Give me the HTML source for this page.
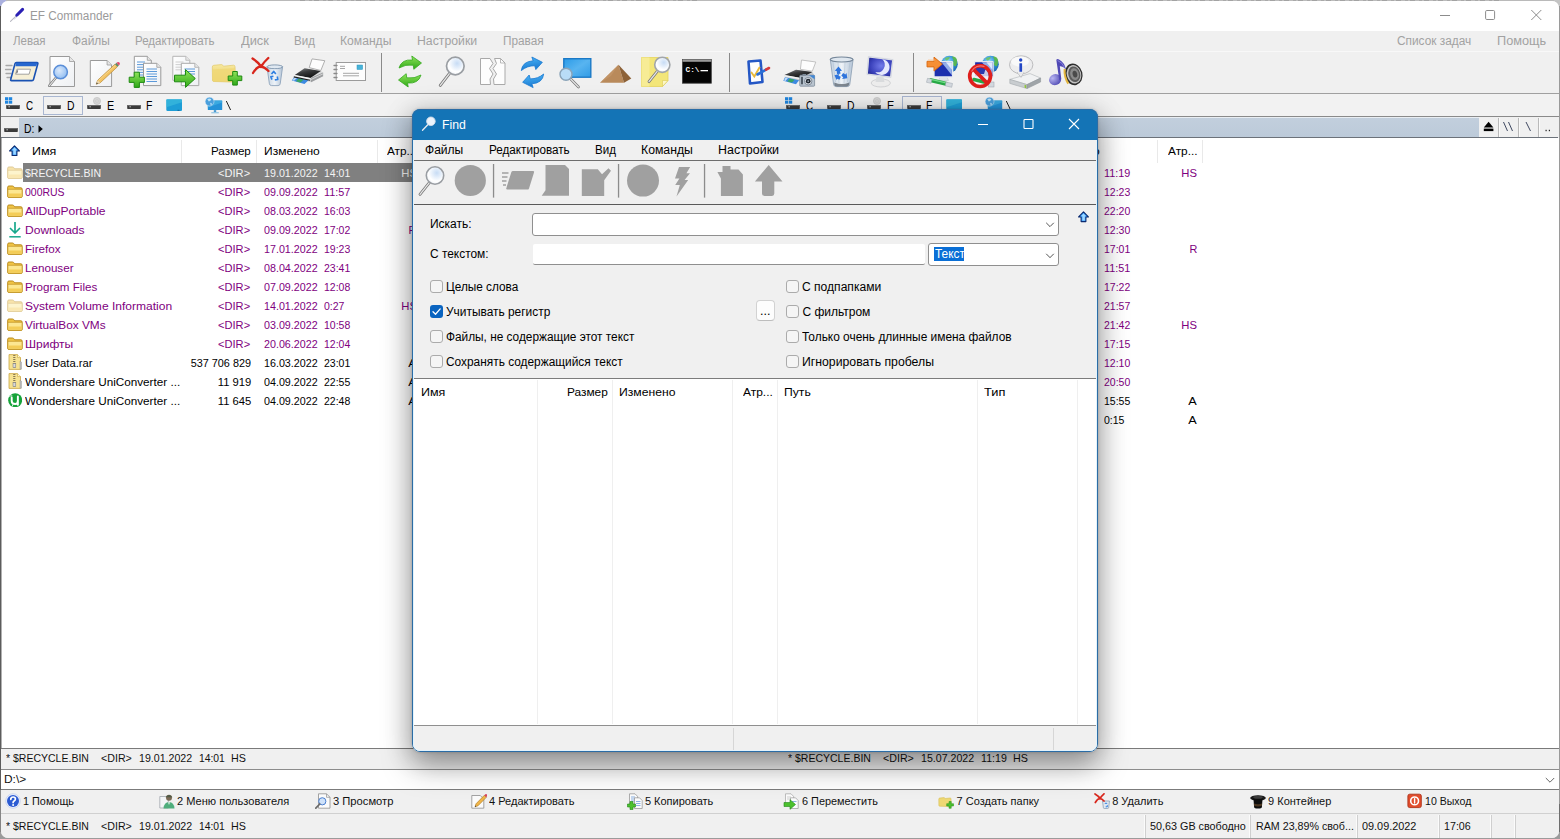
<!DOCTYPE html>
<html lang="ru"><head><meta charset="utf-8"><title>EF Commander</title><style>
html,body{margin:0;padding:0;}
body{width:1560px;height:839px;overflow:hidden;position:relative;background:#f0f0f0;font-family:"Liberation Sans",sans-serif;}
.b{position:absolute;display:block;}
.t{position:absolute;display:block;white-space:pre;line-height:16px;height:16px;font-family:"Liberation Sans",sans-serif;}
</style></head>
<body>
<div class="b" style="left:0px;top:0px;width:1560px;height:839px;background:#9b9b9b;"></div>
<div class="b" style="left:1500px;top:0px;width:60px;height:8px;background:#c4c4c4;"></div>
<div class="b" style="left:0px;top:0px;width:6px;height:6px;background:#aab0de;"></div>
<div class="b" style="left:1px;top:1px;width:1558px;height:837px;background:#f0f0f0;border-radius:7px;"></div>
<div class="b" style="left:6px;top:0px;width:1548px;height:1px;background:#bababa;"></div>
<div class="b" style="left:300px;top:0px;width:400px;height:1px;background:repeating-linear-gradient(90deg,#a3a3a3 0 5px,#bcbcbc 5px 9px,#a9a9a9 9px 12px,#bebebe 12px 14px);"></div>
<div class="b" style="left:920px;top:0px;width:580px;height:1px;background:repeating-linear-gradient(90deg,#a3a3a3 0 5px,#bcbcbc 5px 9px,#a9a9a9 9px 12px,#bebebe 12px 14px);"></div>
<div class="b" style="left:1px;top:1px;width:1558px;height:30px;background:#ffffff;border-radius:7px 7px 0 0;"></div>
<svg class="b" style="left:9px;top:7px" width="16" height="16" viewBox="0 0 16 16"><path d="M1.500 14.300 L7.800 8.300" stroke="#b9b9c2" stroke-width="1.100" stroke-linecap="round"/><path d="M7.800 8.300 L13.600 2.400" stroke="#2a1fb4" stroke-width="3" stroke-linecap="round"/><path d="M8.800 9.300 L5 12.300" stroke="#c9cbe8" stroke-width="0.800"/></svg>
<span class="t" id="t0" style="top:8px;font-size:12px;color:#9a9a9a;left:29.88px;transform:scaleX(0.979);transform-origin:left center;">EF Commander</span>
<svg class="b" style="left:1436px;top:8px" width="112" height="16" viewBox="0 0 112 16"><path d="M4 7.500 h10" stroke="#8c8c8c" stroke-width="1"/><rect x="49.600" y="2.500" width="9" height="9" rx="1.200" fill="none" stroke="#8c8c8c" stroke-width="1"/><path d="M95.300 2 l10 10 M105.300 2 l-10 10" stroke="#8c8c8c" stroke-width="1"/></svg>
<span class="t" id="t1" style="top:33px;font-size:12px;color:#a2a2a2;left:12.88px;transform:scaleX(0.960);transform-origin:left center;">Левая</span>
<span class="t" id="t2" style="top:33px;font-size:12px;color:#a2a2a2;left:71.58px;transform:scaleX(0.994);transform-origin:left center;">Файлы</span>
<span class="t" id="t3" style="top:33px;font-size:12px;color:#a2a2a2;left:135.18px;transform:scaleX(0.960);transform-origin:left center;">Редактировать</span>
<span class="t" id="t4" style="top:33px;font-size:12px;color:#a2a2a2;left:240.88px;transform:scaleX(1.069);transform-origin:left center;">Диск</span>
<span class="t" id="t5" style="top:33px;font-size:12px;color:#a2a2a2;left:293.88px;transform:scaleX(0.962);transform-origin:left center;">Вид</span>
<span class="t" id="t6" style="top:33px;font-size:12px;color:#a2a2a2;left:339.88px;transform:scaleX(1.011);transform-origin:left center;">Команды</span>
<span class="t" id="t7" style="top:33px;font-size:12px;color:#a2a2a2;left:416.88px;transform:scaleX(1.023);transform-origin:left center;">Настройки</span>
<span class="t" id="t8" style="top:33px;font-size:12px;color:#a2a2a2;left:502.88px;transform:scaleX(0.981);transform-origin:left center;">Правая</span>
<span class="t" id="t9" style="top:33px;font-size:12px;color:#a2a2a2;left:1396.58px;transform:scaleX(0.988);transform-origin:left center;">Список задач</span>
<span class="t" id="t10" style="top:33px;font-size:12px;color:#a2a2a2;left:1496.58px;transform:scaleX(1.061);transform-origin:left center;">Помощь</span>
<div class="b" style="left:1px;top:51px;width:1558px;height:1px;background:#f8f8f8;"></div>
<div class="b" style="left:1px;top:93px;width:1558px;height:1px;background:#a0a0a0;"></div>
<div class="b" style="left:381px;top:53px;width:1px;height:39px;background:#8a8a8a;"></div>
<div class="b" style="left:729px;top:53px;width:1px;height:39px;background:#8a8a8a;"></div>
<div class="b" style="left:913px;top:53px;width:1px;height:39px;background:#8a8a8a;"></div>
<svg class="b" style="left:0;top:52px" width="1560" height="42" viewBox="0 52 1560 42">
<defs>
<linearGradient id="gGreen" x1="0" y1="0" x2="0" y2="1"><stop offset="0" stop-color="#8fe45a"/><stop offset="1" stop-color="#2fa818"/></linearGradient>
<linearGradient id="gBlue" x1="0" y1="0" x2="0" y2="1"><stop offset="0" stop-color="#49b2f5"/><stop offset="1" stop-color="#1877cf"/></linearGradient>
<linearGradient id="gFold" x1="0" y1="0" x2="0" y2="1"><stop offset="0" stop-color="#f7e9a0"/><stop offset="1" stop-color="#e6c451"/></linearGradient>
<linearGradient id="gPage" x1="0" y1="0" x2="1" y2="1"><stop offset="0" stop-color="#ffffff"/><stop offset="1" stop-color="#eef0f3"/></linearGradient>
<radialGradient id="gLens" cx="0.6" cy="0.35" r="0.8"><stop offset="0" stop-color="#c7dcf5"/><stop offset="0.6" stop-color="#ffffff"/><stop offset="1" stop-color="#e9eef5"/></radialGradient>
<radialGradient id="gLensB" cx="0.4" cy="0.4" r="0.8"><stop offset="0" stop-color="#dbe9fb"/><stop offset="1" stop-color="#7eb2ef"/></radialGradient>
<linearGradient id="gBin" x1="0" y1="0" x2="1" y2="0"><stop offset="0" stop-color="#c5d3e2"/><stop offset="0.5" stop-color="#eef3f8"/><stop offset="1" stop-color="#b4c4d6"/></linearGradient>
<linearGradient id="gScreen" x1="0" y1="0" x2="1" y2="1"><stop offset="0" stop-color="#2b9be8"/><stop offset="0.5" stop-color="#58b4f0"/><stop offset="1" stop-color="#2f9be6"/></linearGradient>
<linearGradient id="gMoon" x1="0" y1="0" x2="1" y2="1"><stop offset="0" stop-color="#4b57c8"/><stop offset="1" stop-color="#1c2478"/></linearGradient>
<radialGradient id="gGlobe" cx="0.4" cy="0.35" r="0.75"><stop offset="0" stop-color="#9fe0ff"/><stop offset="0.55" stop-color="#2f8fd8"/><stop offset="1" stop-color="#1b5fa8"/></radialGradient>
<linearGradient id="gSilver" x1="0" y1="0" x2="0" y2="1"><stop offset="0" stop-color="#f4f4f4"/><stop offset="1" stop-color="#a9adb0"/></linearGradient>
<radialGradient id="gNote" cx="0.35" cy="0.3" r="0.8"><stop offset="0" stop-color="#b9b6f2"/><stop offset="1" stop-color="#4a45b0"/></radialGradient>
<radialGradient id="gSpk" cx="0.45" cy="0.5" r="0.6"><stop offset="0" stop-color="#5a5a5a"/><stop offset="0.45" stop-color="#a8a8a8"/><stop offset="0.75" stop-color="#6c6c6c"/><stop offset="1" stop-color="#2e2e2e"/></radialGradient>
<linearGradient id="gPrinter" x1="0" y1="0" x2="0" y2="1"><stop offset="0" stop-color="#4a4a4a"/><stop offset="1" stop-color="#1d1d1d"/></linearGradient>
<linearGradient id="gPrTop" x1="0" y1="0" x2="0.600" y2="1"><stop offset="0" stop-color="#8a8c8e"/><stop offset="0.450" stop-color="#3a3b3c"/><stop offset="1" stop-color="#0e0e0e"/></linearGradient>
<radialGradient id="gMoon2" cx="0.550" cy="0.450" r="0.700"><stop offset="0" stop-color="#737bea"/><stop offset="0.600" stop-color="#3a41bb"/><stop offset="1" stop-color="#1d2283"/></radialGradient>
</defs>
<g><path d="M6 65.5h6 M5.5 69.5h5.5 M6 73.5h5 M7 77.5h4" stroke="#a8a8a8" stroke-width="1.3" stroke-linecap="round"/><path d="M16.5 62.5 L37 62.5 Q38.2 62.5 37.8 63.8 L33.5 79.5 Q33.2 80.6 32 80.6 L11.5 80.6 Q10.3 80.6 10.7 79.4 L15 63.6 Q15.3 62.5 16.5 62.5z" fill="#f6efd6" stroke="#1a52b3" stroke-width="1.6"/><path d="M16.2 62.8 L37.3 62.8 L36.4 66.2 L15.3 66.2z" fill="#2767cf"/><path d="M17 69.2 h13.5 l-1.4 5 h-13.5z" fill="#fff" stroke="#8d8d8d" stroke-width="0.8"/><path d="M17.6 70.4 l-0.8 2.8" stroke="#333" stroke-width="0.8"/></g><path d="M50 56.5 h19.5 l5 5 v25 h-24.5 z" fill="url(#gPage)" stroke="#9a9a9a" stroke-width="1"/><path d="M69.5 56.5 v5 h5" fill="#e6e6e6" stroke="#9a9a9a" stroke-width="0.8"/><line x1="56.2692" y1="77.2425" x2="49.2" y2="85.8" stroke="#777777" stroke-width="2.4" stroke-linecap="round"/><line x1="56.2692" y1="77.2425" x2="49.2" y2="85.8" stroke="#e6e6e6" stroke-width="1.08" stroke-linecap="round"/><circle cx="60.6" cy="72" r="6.8" fill="url(#gLensB)" stroke="#5a8ed8" stroke-width="1.5"/><path d="M90.3 60.5 h16.8 l4.5 4.5 v21.5 h-21.3 z" fill="url(#gPage)" stroke="#9a9a9a" stroke-width="1"/><path d="M107.1 60.5 v4.5 h4.5" fill="#e6e6e6" stroke="#9a9a9a" stroke-width="0.8"/><path d="M96.200 84.200 L97.700 80.200 L115 64.200 L117.400 66.800 L100.200 82.800z" fill="#f3c363" stroke="#b8862f" stroke-width="0.700" stroke-linejoin="round"/><path d="M98.500 80.600 L115.800 64.900" stroke="#f9dc98" stroke-width="0.800"/><path d="M115 64.200 L116.500 62.800 L118.900 65.400 L117.400 66.800z" fill="#5f8a66"/><path d="M116.500 62.800 Q118.200 61.200 119.500 62.500 Q120.700 63.900 118.900 65.400z" fill="#e2466b"/><path d="M96.200 84.200 L97.700 80.200 L100.200 82.800z" fill="#ead7b3"/><path d="M96.200 84.200 l0.700 -1.800 l1.100 1.100z" fill="#2b2b2b"/><path d="M134.3 56.3 h13 l4 4 v20 h-17 z" fill="url(#gPage)" stroke="#9a9a9a" stroke-width="1"/><path d="M147.3 56.3 v4 h4" fill="#e6e6e6" stroke="#9a9a9a" stroke-width="0.8"/><line x1="137" y1="62" x2="145" y2="62" stroke="#4a8fd6" stroke-width="0.9"/><line x1="137" y1="64.6" x2="145" y2="64.6" stroke="#4a8fd6" stroke-width="0.9"/><line x1="137" y1="67.2" x2="145" y2="67.2" stroke="#4a8fd6" stroke-width="0.9"/><line x1="137" y1="69.8" x2="145" y2="69.8" stroke="#4a8fd6" stroke-width="0.9"/><line x1="137" y1="72.4" x2="145" y2="72.4" stroke="#4a8fd6" stroke-width="0.9"/><line x1="137" y1="75" x2="145" y2="75" stroke="#4a8fd6" stroke-width="0.9"/><path d="M143.5 63.3 h13.3 l4 4 v18.3 h-17.3 z" fill="url(#gPage)" stroke="#9a9a9a" stroke-width="1"/><path d="M156.8 63.3 v4 h4" fill="#e6e6e6" stroke="#9a9a9a" stroke-width="0.8"/><line x1="146.5" y1="69" x2="157" y2="69" stroke="#4a8fd6" stroke-width="0.9"/><line x1="146.5" y1="71.5" x2="157" y2="71.5" stroke="#4a8fd6" stroke-width="0.9"/><line x1="146.5" y1="74" x2="157" y2="74" stroke="#4a8fd6" stroke-width="0.9"/><line x1="146.5" y1="76.5" x2="157" y2="76.5" stroke="#4a8fd6" stroke-width="0.9"/><line x1="146.5" y1="79" x2="157" y2="79" stroke="#4a8fd6" stroke-width="0.9"/><line x1="146.5" y1="81.5" x2="157" y2="81.5" stroke="#4a8fd6" stroke-width="0.9"/><path d="M134.2 72.2 h5.2 v5 h5 v5.2 h-5 v5 h-5.2 v-5 h-5 v-5.2 h5 z" fill="url(#gGreen)" stroke="#1f8a12" stroke-width="1" stroke-linejoin="round"/><path d="M172.8 56.3 h13 l4 4 v20 h-17 z" fill="url(#gPage)" stroke="#b5b5b5" stroke-width="1"/><path d="M185.8 56.3 v4 h4" fill="#e6e6e6" stroke="#b5b5b5" stroke-width="0.8"/><line x1="175.5" y1="62" x2="183.5" y2="62" stroke="#c9c9c9" stroke-width="0.9"/><line x1="175.5" y1="64.6" x2="183.5" y2="64.6" stroke="#c9c9c9" stroke-width="0.9"/><line x1="175.5" y1="67.2" x2="183.5" y2="67.2" stroke="#c9c9c9" stroke-width="0.9"/><line x1="175.5" y1="69.8" x2="183.5" y2="69.8" stroke="#c9c9c9" stroke-width="0.9"/><path d="M181.3 63.3 h13.5 l4 4 v18.3 h-17.5 z" fill="url(#gPage)" stroke="#a9a9a9" stroke-width="1"/><path d="M194.8 63.3 v4 h4" fill="#e6e6e6" stroke="#a9a9a9" stroke-width="0.8"/><line x1="184.5" y1="69" x2="195" y2="69" stroke="#4a8fd6" stroke-width="0.9"/><line x1="184.5" y1="71.5" x2="195" y2="71.5" stroke="#4a8fd6" stroke-width="0.9"/><line x1="184.5" y1="74" x2="195" y2="74" stroke="#4a8fd6" stroke-width="0.9"/><path d="M174.5 75.2 h11 v-5.6 l9.8 8.9 l-9.8 8.9 v-5.6 h-11z" fill="url(#gGreen)" stroke="#1f8a12" stroke-width="1" stroke-linejoin="round"/><path d="M212.3 67 q0 -1.5 1.5 -1.7 l8 -0.7 l2 1.6 l9.6 -1 q1.6 0 1.6 1.5 l0.5 14 q0 1.4 -1.5 1.4 l-20 -0.6 q-1.5 0 -1.5 -1.5z" fill="url(#gFold)" stroke="#e3cd74" stroke-width="0.8"/><path d="M212.5 69.5 l22.5 -1.2 l0.4 12 q0 1.5 -1.5 1.5 l-20 -0.6 q-1.4 0 -1.4 -1.5z" fill="#efd878" opacity="0.9"/><path d="M232.7 71.5 h4.6 v4.5 h4.5 v4.6 h-4.5 v4.5 h-4.6 v-4.5 h-4.5 v-4.6 h4.5 z" fill="url(#gGreen)" stroke="#1f8a12" stroke-width="1" stroke-linejoin="round"/><path d="M267 66.8 l2.4 17 q0.3 1.8 2.2 1.8 h6.4 q1.9 0 2.2 -1.8 l2.4 -17z" fill="url(#gBin)" stroke="#8ea4bb" stroke-width="0.9"/><ellipse cx="274.8" cy="66.8" rx="7.8" ry="1.9" fill="#dfe8f1" stroke="#7c93ab" stroke-width="0.9"/><path d="M271.5 74 l2.3 -2.6 l2 2.6 M277.3 76.5 l0.5 3 l-3 0.4 M272 79.6 l-1.2 -2.8 l2.6 -0.6" fill="none" stroke="#2f7fe0" stroke-width="1.6" stroke-linejoin="round"/><path d="M252.5 58.5 Q258 62 261 66.5 Q264 62 268.3 58 M253 73 Q257 66.5 261 66.5 Q264.5 67 268.5 71" fill="none" stroke="#d8261c" stroke-width="2.3" stroke-linecap="round"/><path d="M309.200 67.600 L312.100 58.900 L324.800 60.700 L320.800 70.500z" fill="#fdfdfd" stroke="#9d9d9d" stroke-width="0.800" stroke-linejoin="round"/><path d="M294.800 75.100 L304.600 68.200 L320.800 71 L323.100 72.400 L323.100 76.300 L311 82.200 L293.500 78z" fill="#d9dadb"/><path d="M294.800 75.100 L304.600 68.200 L320.800 71 L310.400 78z" fill="url(#gPrTop)"/><path d="M310.400 78 L323.100 72.400 L323.100 76.300 L311 82.200z" fill="#9c9ea0"/><path d="M311 79.500 L323.100 73.800" stroke="#e8e8e8" stroke-width="0.700"/><path d="M294.800 75.100 L310.400 78 L310.700 79.600 L294 76.500z" fill="#f4f4f4"/><path d="M294 77.300 L308.500 80.300 L304.500 84 L291.800 80.600z" fill="#3d8ae0"/><path d="M298.500 78.600 L303.500 79.700 L300.500 82.500 L296 81.300z" fill="#3aa564"/><path d="M294.500 77.500 L297 78 L294 80.800 L292.300 80.300z" fill="#b9d6f5"/><path d="M293.800 76.900 L310 80.200" stroke="#1e1e1e" stroke-width="1.100"/><rect x="336.2" y="62.5" width="29.3" height="18" fill="#fdfdfd" stroke="#9b9b9b" stroke-width="1"/><path d="M334 65.5h3 M334 69.5h3 M334 73.500h3 M334 77.500h3" stroke="#8a8a8a" stroke-width="1.3" stroke-linecap="round"/><rect x="357" y="65" width="5.600" height="4.500" fill="#48b3d9" stroke="#2f97bf" stroke-width="0.5"/><path d="M340 66.300h5 M340 68.500h5 M343 73.300h16 M343 75.800h16" stroke="#9c9c9c" stroke-width="0.9"/><g transform="translate(410 71.5) rotate(0) scale(1)"><path d="M-11 -3.500 Q-8.500 -12.500 2.500 -11.500 L1.800 -15.500 L11.500 -8.500 L3.800 -2.200 L3.300 -6.300 Q-4.500 -7.500 -11 -3.500z" fill="url(#gGreen)" stroke="#35a81e" stroke-width="0.8" stroke-linejoin="round"/><path d="M11 3.500 Q8.500 12.500 -2.500 11.500 L-1.800 15.500 L-11.500 8.500 L-3.800 2.200 L-3.300 6.300 Q4.500 7.500 11 3.500z" fill="url(#gGreen)" stroke="#35a81e" stroke-width="0.8" stroke-linejoin="round"/></g><line x1="449.9" y1="72.9482" x2="440.3" y2="85.3" stroke="#777777" stroke-width="3" stroke-linecap="round"/><line x1="449.9" y1="72.9482" x2="440.3" y2="85.3" stroke="#e6e6e6" stroke-width="1.35" stroke-linecap="round"/><circle cx="455.3" cy="66" r="8.8" fill="url(#gLens)" stroke="#9a9ea3" stroke-width="1.7"/><path d="M480.500 58.500 h9.500 l3 5 l-3.500 5 l3.500 5.500 l-3 5 l0.500 5.500 h-10z" fill="#fdfdfd" stroke="#a9a9a9" stroke-width="1" stroke-linejoin="round"/><path d="M494.500 58.500 h6 l4.500 4.500 v21.500 h-11 l-0.500 -5.500 l3 -5 l-3.500 -5.500 l3.500 -5z" fill="#fdfdfd" stroke="#a9a9a9" stroke-width="1" stroke-linejoin="round"/><path d="M500.500 58.500 v4.500 h4.500" fill="none" stroke="#a9a9a9" stroke-width="0.8"/><g transform="translate(532.5 72.3) rotate(-9) scale(0.98)"><path d="M-11 -3.500 Q-8.500 -12.500 2.500 -11.500 L1.800 -15.500 L11.500 -8.500 L3.800 -2.200 L3.300 -6.300 Q-4.500 -7.500 -11 -3.500z" fill="url(#gBlue)" stroke="#1b7bd2" stroke-width="0.8" stroke-linejoin="round"/><path d="M11 3.500 Q8.500 12.500 -2.500 11.500 L-1.800 15.500 L-11.500 8.500 L-3.800 2.200 L-3.300 6.300 Q4.500 7.500 11 3.500z" fill="url(#gBlue)" stroke="#1b7bd2" stroke-width="0.8" stroke-linejoin="round"/></g><rect x="563.800" y="58.700" width="27" height="18.500" fill="url(#gScreen)" stroke="#1b79c6" stroke-width="1.400"/><line x1="570.192" y1="78.4926" x2="578.5" y2="87" stroke="#777777" stroke-width="2.6" stroke-linecap="round"/><line x1="570.192" y1="78.4926" x2="578.5" y2="87" stroke="#e6e6e6" stroke-width="1.17" stroke-linecap="round"/><circle cx="566" cy="74.2" r="6" fill="#b9dcf7" stroke="#8aa3b8" stroke-width="1.4"/><path d="M618.500 64.800 L600 82.700 L624 82.700z" fill="#b98a5b"/><path d="M618.500 64.800 L624 82.700 L631.300 78.500z" fill="#8d6238"/><path d="M618.500 64.800 L611 76 L600 82.700z" fill="#c69a6c" opacity="0.6"/><path d="M641.500 57.500 h20 l6.500 0 v23 l-5.500 6 h-21z" fill="#f3e679" stroke="#e5d45d" stroke-width="0.8"/><path d="M641.500 57.500 h8 v29 h-8z" fill="#f7ee9c" opacity="0.8"/><path d="M662.500 86.500 v-6 h5.500z" fill="#fbf6c8" stroke="#dccb55" stroke-width="0.600"/><line x1="657.6" y1="70.7723" x2="649" y2="81.7" stroke="#777777" stroke-width="2.8" stroke-linecap="round"/><line x1="657.6" y1="70.7723" x2="649" y2="81.7" stroke="#e6e6e6" stroke-width="1.26" stroke-linecap="round"/><circle cx="662.3" cy="64.8" r="7.6" fill="url(#gLens)" stroke="#a2a6aa" stroke-width="1.6"/><rect x="682.500" y="59.500" width="28.800" height="23.700" fill="#050505" stroke="#3c3c3c" stroke-width="0.800"/><rect x="682.500" y="59.500" width="28.800" height="2.300" fill="#9a9a9a"/><text x="685.500" y="71.500" font-family="Liberation Mono, monospace" font-size="7.500" font-weight="bold" fill="#fff" textLength="14" lengthAdjust="spacingAndGlyphs">C:\</text><rect x="700.500" y="70" width="7.500" height="1.300" fill="#fff"/><path d="M748.500 61.500 l12 -1 l2 21.500 l-12.500 1.500z" fill="#fdfdfd" stroke="#2457c5" stroke-width="2.600" stroke-linejoin="round"/><path d="M751.500 72.500 l2.800 4 l5.200 -9" fill="none" stroke="#e8b93a" stroke-width="1.900" stroke-linecap="round"/><path d="M757.500 74.500 l8.500 -4.800" stroke="#2b6fd6" stroke-width="2.600" stroke-linecap="round"/><path d="M766 69.700 l3 -1.700" stroke="#d83a3a" stroke-width="2.600" stroke-linecap="round"/><path d="M800.400 69.300 L801.500 60 L815.800 62 L812.300 71.200z" fill="#fdfdfd" stroke="#b5b5b5" stroke-width="0.800" stroke-linejoin="round"/><path d="M784.600 75 L796 69.700 L812.300 72 L814.500 75.500 L803 82 L785 79z" fill="#c9cbcd"/><path d="M784.600 75 L796 69.700 L812.300 72 L801 78z" fill="url(#gPrTop)"/><path d="M784.600 75 L801 78 L801 79.500 L784.300 76.500z" fill="#f1f1f1"/><path d="M785 77.300 L799 80.200 L796 84.200 L783.300 80.800z" fill="#3d8ae0"/><path d="M789.500 78.600 L794.500 79.700 L792 82.600 L787.500 81.500z" fill="#3aa564"/><path d="M785.500 77.600 L788 78.100 L785.500 80.900 L784 80.500z" fill="#c3dcf6"/><rect x="799.800" y="75.200" width="14.800" height="11" rx="0.800" fill="#b9c4cf" stroke="#7d8b99" stroke-width="0.800"/><path d="M809 75.200 h5.600 v4z" fill="#3f86d6"/><rect x="801.200" y="76.800" width="1.600" height="7.500" fill="#39424e"/><rect x="802.500" y="74" width="3.500" height="1.600" fill="#7d8b99"/><circle cx="808.200" cy="81.200" r="3.700" fill="#e9eef3" stroke="#596675" stroke-width="0.700"/><circle cx="808.200" cy="81.200" r="2.400" fill="#1f262f"/><circle cx="808.200" cy="81.200" r="0.900" fill="#8c97a3"/><path d="M830.300 59.500 l3.300 24.800 q0.300 2.300 2.600 2.300 h11 q2.300 0 2.600 -2.300 l3.300 -24.800z" fill="url(#gBin)" stroke="#93a5b8" stroke-width="0.900"/><path d="M834.300 82.500 q7.500 3 15 0 l-0.300 2.300 q-0.300 1.800 -2.600 1.800 h-9.500 q-2.300 0 -2.600 -1.800z" fill="#5b646e" opacity="0.750"/><path d="M833 62 l2.500 20 M838 62.500 l1 20.500 M845 62.500 l-1 20.500 M850 62 l-2.500 20" stroke="#a9bccf" stroke-width="0.700" opacity="0.700"/><ellipse cx="841.600" cy="59.500" rx="11.400" ry="2.500" fill="#dfe7ef" stroke="#76889b" stroke-width="1.100"/><path d="M834.800 70.800 l3.700 -4.200 l3.500 4.200 l-2 0.300 l0.500 2.700 l-3.500 0.200 l-0.300 -3z M846.500 73 l0.800 5.200 l-5.200 0.800 l1.200 -1.800 l-2 -1.500 l1.800 -2.800 l2.200 1.500z M836.500 80 l-2 -4.800 l4.800 -1.200 l-0.800 1.800 l2.300 1 l-1.300 3 l-2.300 -1z" fill="#2e74dc"/><ellipse cx="880.800" cy="83" rx="9.600" ry="4" fill="#ececec" stroke="#c4c6c8" stroke-width="0.700"/><path d="M876.500 76.500 h7 l1 5.500 h-9z" fill="#d9dbdd"/><path d="M868.500 56.600 L893 59.700 L890.800 77.400 L867 74.300z" fill="url(#gMoon2)" stroke="#e9ebef" stroke-width="1.700" stroke-linejoin="round"/><path d="M868.500 56.600 L893 59.700 L890.800 77.400 L867 74.300z" fill="none" stroke="#b4b8c4" stroke-width="0.400" stroke-linejoin="round" transform="translate(0 0)"/><path d="M882.300 59.300 a7.900 7.900 0 1 1 -7 12.600 a7.400 7.400 0 0 0 7 -12.600z" fill="#eef0ff" opacity="0.950"/><circle cx="949.4" cy="64.2" r="8.400" fill="url(#gGlobe)"/><path d="M951.9 56.7 q3.500 -1 5 2.500 q0.800 3.500 -1 7 q-2.500 0.500 -3 -2.500 q1.500 -3 -1 -7z" fill="#5dbb46" opacity="0.900"/><path d="M944.4 58.7 q2.500 -2 5.500 -1.500 q-0.500 2.500 -3 3.500z" fill="#6cc65a" opacity="0.850"/><path d="M940 77 h7 l1.500 3.500 h-10z" fill="#dfe3e8" stroke="#aab2bc" stroke-width="0.400"/><rect x="934" y="61.6" width="18.600" height="15.400" rx="0.800" fill="#1c2fae" stroke="#e6eaf0" stroke-width="1.300"/><path d="M941.4 62.3 h10.500 v13 z" fill="#a9c4f5" opacity="0.850"/><path d="M945.9 62.3 h6 v7.500z" fill="#e9f1ff" opacity="0.900"/><path d="M927 61.300 h7 v-4.200 l8.300 7 l-8.300 7 v-4.200 h-7z" fill="#f68f35" stroke="#d96a12" stroke-width="0.900" stroke-linejoin="round"/><path d="M928 60 h7" stroke="#fbc38f" stroke-width="0.800"/><path d="M931 80.200 L946 83.800" stroke="#27a845" stroke-width="4.200" stroke-linecap="round"/><path d="M932 79.600 L945 82.700" stroke="#6fdc86" stroke-width="1.200" stroke-linecap="round"/><path d="M927.500 78.300 l4.500 1 l-1 4 l-4.500 -1z" fill="#d3d8de" stroke="#98a1ab" stroke-width="0.500"/><path d="M946 82 l6.500 1.500 l-0.800 3.800 l-6.500 -1.500z" fill="#d3d8de" stroke="#98a1ab" stroke-width="0.500"/><circle cx="990.4" cy="64.2" r="8.400" fill="url(#gGlobe)"/><path d="M992.9 56.7 q3.500 -1 5 2.500 q0.800 3.500 -1 7 q-2.500 0.500 -3 -2.500 q1.500 -3 -1 -7z" fill="#5dbb46" opacity="0.900"/><path d="M985.4 58.7 q2.500 -2 5.500 -1.500 q-0.500 2.500 -3 3.500z" fill="#6cc65a" opacity="0.850"/><path d="M980.5 77 h7 l1.500 3.500 h-10z" fill="#dfe3e8" stroke="#aab2bc" stroke-width="0.400"/><rect x="974.5" y="61.6" width="18.600" height="15.400" rx="0.800" fill="#1a2aa8" stroke="#e6eaf0" stroke-width="1.300"/><path d="M981.9 62.3 h10.500 v13 z" fill="#a9c4f5" opacity="0.850"/><path d="M986.4 62.3 h6 v7.500z" fill="#e9f1ff" opacity="0.900"/><circle cx="980.100" cy="76.100" r="8.700" fill="#f4f4f6" opacity="0.800"/><path d="M974 79.500 L984 82" stroke="#27a845" stroke-width="3.600" stroke-linecap="round"/><path d="M976 67.500 h10 l-2 6.500 h-9z" fill="#1a2aa8" opacity="0.900"/><rect x="988.500" y="82" width="5.500" height="5" fill="#d3d8de" stroke="#98a1ab" stroke-width="0.500"/><circle cx="980.100" cy="76.100" r="10.400" fill="none" stroke="#df1f1c" stroke-width="3.700"/><path d="M972.800 68.800 L987.400 83.400" stroke="#df1f1c" stroke-width="3.700"/><path d="M971.500 71.500 a10.400 10.400 0 0 1 13 -5" fill="none" stroke="#f58a84" stroke-width="1.200" opacity="0.800"/><path d="M1009.800 79.400 L1030 73.600 L1040.600 78 L1027 84.600z" fill="#f1f2f3" stroke="#aeb3b7" stroke-width="0.600" stroke-linejoin="round"/><path d="M1009.800 79.400 L1027 84.600 L1027 88.600 L1009.800 83.400z" fill="#c9cdd0" stroke="#9da2a6" stroke-width="0.500" stroke-linejoin="round"/><path d="M1027 84.600 L1040.600 78 L1040.600 82 L1027 88.600z" fill="#9fa4a8" stroke="#8b9094" stroke-width="0.500" stroke-linejoin="round"/><path d="M1024.600 84.700 l1.600 0.500 v3 l-1.600 -0.500z" fill="#8fc63b"/><ellipse cx="1021.200" cy="64.800" rx="11.700" ry="9" fill="#ededee" stroke="#bcbcbe" stroke-width="1"/><ellipse cx="1020" cy="61.500" rx="9" ry="5" fill="#fbfbfb" opacity="0.800"/><path d="M1017.300 72.600 l3.700 4.800 l2.800 -4.600z" fill="#ededee" stroke="#bcbcbe" stroke-width="0.900"/><path d="M1018 72.600 l5.200 -0.300" stroke="#ededee" stroke-width="1.700"/><rect x="1019.400" y="63.300" width="2.700" height="8.500" rx="0.500" fill="#2347c5"/><circle cx="1020.700" cy="60" r="1.700" fill="#2347c5"/><g transform="rotate(-14 1073.700 74.400)"><ellipse cx="1073.700" cy="74.400" rx="8.800" ry="10.900" fill="#2d2d2d"/><ellipse cx="1074" cy="74.400" rx="7.200" ry="9.300" fill="#c3c3c3"/><ellipse cx="1074.300" cy="74.400" rx="5.900" ry="7.900" fill="#5c5c5c"/><ellipse cx="1074.600" cy="74.400" rx="4.300" ry="6" fill="#8a8a8a"/><ellipse cx="1075" cy="74.400" rx="2.300" ry="3.400" fill="#4a4a4a"/><path d="M1066.200 67 q-2.500 7.500 0 15" fill="none" stroke="#e3b53f" stroke-width="2"/></g><ellipse cx="1055.100" cy="79.700" rx="6.100" ry="5.500" transform="rotate(-20 1055.100 79.700)" fill="url(#gNote)"/><path d="M1059.300 80.300 L1056.300 59.800 Q1057.500 58.300 1059 59.500 Q1064.500 62.500 1066 69.500 Q1062.500 65.800 1059.800 66.300 L1061.300 79z" fill="#5049b6"/><path d="M1057.600 60.500 Q1062.500 62.500 1064.500 67.500" fill="none" stroke="#8d88de" stroke-width="0.900"/></svg>
<div class="b" style="left:1px;top:94px;width:1558px;height:22px;background:#f2f2f2;"></div>
<div class="b" style="left:1px;top:116px;width:1558px;height:1px;background:#8a8a8a;"></div>
<div class="b" style="left:43px;top:96px;width:39.5px;height:18.5px;background:#f1f1f1;border:1px solid #a9b7d1;box-sizing:border-box;"></div>
<svg class="b" style="left:5px;top:97px" width="16" height="13" viewBox="0 0 16 13"><rect x="0" y="0.200" width="3.300" height="3" fill="#1f86e0"/><rect x="3.900" y="0.200" width="3.300" height="3" fill="#1f86e0"/><rect x="0" y="3.700" width="3.300" height="3" fill="#1f86e0"/><rect x="3.900" y="3.700" width="3.300" height="3" fill="#1f86e0"/><rect x="1.200" y="8" width="13.600" height="3.900" rx="0.600" fill="#3b3b3b"/><rect x="1.200" y="8" width="13.600" height="1" fill="#6b6b6b"/><rect x="3.500" y="9.300" width="1.300" height="1" fill="#d8d8d8"/></svg>
<span class="t" id="t11" style="top:97.8px;font-size:12px;color:#000;left:25.68px;transform:scaleX(0.819);transform-origin:left center;">C</span>
<svg class="b" style="left:46px;top:97px" width="16" height="13" viewBox="0 0 16 13"><rect x="1.200" y="8" width="13.600" height="3.900" rx="0.600" fill="#3b3b3b"/><rect x="1.200" y="8" width="13.600" height="1" fill="#6b6b6b"/><rect x="3.500" y="9.300" width="1.300" height="1" fill="#d8d8d8"/></svg>
<span class="t" id="t12" style="top:97.8px;font-size:12px;color:#000;left:66.58px;transform:scaleX(0.865);transform-origin:left center;">D</span>
<svg class="b" style="left:86px;top:97px" width="16" height="13" viewBox="0 0 16 13"><circle cx="11" cy="4" r="3.600" fill="#d5d5d5" stroke="#bdbdbd" stroke-width="0.600"/><circle cx="11" cy="4" r="1.100" fill="#f0f0f0" stroke="#aaa" stroke-width="0.400"/><rect x="1.200" y="8" width="13.600" height="3.900" rx="0.600" fill="#3b3b3b"/><rect x="1.200" y="8" width="13.600" height="1" fill="#6b6b6b"/><rect x="3.500" y="9.300" width="1.300" height="1" fill="#d8d8d8"/></svg>
<span class="t" id="t13" style="top:97.8px;font-size:12px;color:#000;left:106.58px;transform:scaleX(0.898);transform-origin:left center;">E</span>
<svg class="b" style="left:126px;top:97px" width="16" height="13" viewBox="0 0 16 13"><rect x="1.200" y="8" width="13.600" height="3.900" rx="0.600" fill="#3b3b3b"/><rect x="1.200" y="8" width="13.600" height="1" fill="#6b6b6b"/><rect x="3.500" y="9.300" width="1.300" height="1" fill="#d8d8d8"/></svg>
<span class="t" id="t14" style="top:97.8px;font-size:12px;color:#000;left:146.38px;transform:scaleX(0.871);transform-origin:left center;">F</span>
<svg class="b" style="left:166px;top:98.5px" width="16.4" height="12.5" viewBox="0 0 16.4 12.5"><rect x="0.300" y="0.300" width="15.800" height="11.600" rx="1.200" fill="#1e9ed6"/><path d="M0.300 0.300 h15.800 v3 l-15.800 5z" fill="#3fc0dd" opacity="0.600"/><rect x="11.500" y="10.800" width="2" height="1.500" fill="#156fa3"/></svg>
<svg class="b" style="left:205px;top:96.5px" width="18" height="17" viewBox="0 0 18 17"><rect x="2.800" y="3.500" width="14.400" height="9.600" rx="0.600" fill="#2592d8"/><path d="M2.800 3.500 h14.400 v2 l-14.400 5z" fill="#45b4e4" opacity="0.700"/><rect x="8.800" y="13.100" width="2.400" height="2.200" fill="#4d9bd0"/><rect x="6.300" y="15.200" width="7.500" height="1.100" fill="#86bfe2"/><circle cx="4.600" cy="4.600" r="4.400" fill="#4a9fdc" stroke="#dcebf7" stroke-width="0.500"/><path d="M2.300 2.300 q2 -1.500 4 0 q-0.500 2 -2.500 2.300z M5.200 5.800 q1.500 0 2 1.500 l-1.500 1z" fill="#bfe3f7"/></svg>
<svg class="b" style="left:225px;top:100px" width="8" height="12" viewBox="0 0 8 12"><path d="M1.300 1 L5.600 10" stroke="#222" stroke-width="1"/></svg>
<div class="b" style="left:902px;top:96px;width:39.5px;height:18.5px;background:#f1f1f1;border:1px solid #a9b7d1;box-sizing:border-box;"></div>
<svg class="b" style="left:785px;top:97px" width="16" height="13" viewBox="0 0 16 13"><rect x="0" y="0.200" width="3.300" height="3" fill="#1f86e0"/><rect x="3.900" y="0.200" width="3.300" height="3" fill="#1f86e0"/><rect x="0" y="3.700" width="3.300" height="3" fill="#1f86e0"/><rect x="3.900" y="3.700" width="3.300" height="3" fill="#1f86e0"/><rect x="1.200" y="8" width="13.600" height="3.900" rx="0.600" fill="#3b3b3b"/><rect x="1.200" y="8" width="13.600" height="1" fill="#6b6b6b"/><rect x="3.500" y="9.300" width="1.300" height="1" fill="#d8d8d8"/></svg>
<span class="t" id="t15" style="top:97.8px;font-size:12px;color:#000;left:805.68px;transform:scaleX(0.819);transform-origin:left center;">C</span>
<svg class="b" style="left:826px;top:97px" width="16" height="13" viewBox="0 0 16 13"><rect x="1.200" y="8" width="13.600" height="3.900" rx="0.600" fill="#3b3b3b"/><rect x="1.200" y="8" width="13.600" height="1" fill="#6b6b6b"/><rect x="3.500" y="9.300" width="1.300" height="1" fill="#d8d8d8"/></svg>
<span class="t" id="t16" style="top:97.8px;font-size:12px;color:#000;left:846.58px;transform:scaleX(0.865);transform-origin:left center;">D</span>
<svg class="b" style="left:866px;top:97px" width="16" height="13" viewBox="0 0 16 13"><circle cx="11" cy="4" r="3.600" fill="#d5d5d5" stroke="#bdbdbd" stroke-width="0.600"/><circle cx="11" cy="4" r="1.100" fill="#f0f0f0" stroke="#aaa" stroke-width="0.400"/><rect x="1.200" y="8" width="13.600" height="3.900" rx="0.600" fill="#3b3b3b"/><rect x="1.200" y="8" width="13.600" height="1" fill="#6b6b6b"/><rect x="3.500" y="9.300" width="1.300" height="1" fill="#d8d8d8"/></svg>
<span class="t" id="t17" style="top:97.8px;font-size:12px;color:#000;left:886.58px;transform:scaleX(0.898);transform-origin:left center;">E</span>
<svg class="b" style="left:906px;top:97px" width="16" height="13" viewBox="0 0 16 13"><rect x="1.200" y="8" width="13.600" height="3.900" rx="0.600" fill="#3b3b3b"/><rect x="1.200" y="8" width="13.600" height="1" fill="#6b6b6b"/><rect x="3.500" y="9.300" width="1.300" height="1" fill="#d8d8d8"/></svg>
<span class="t" id="t18" style="top:97.8px;font-size:12px;color:#000;left:926.38px;transform:scaleX(0.871);transform-origin:left center;">F</span>
<svg class="b" style="left:946px;top:98.5px" width="16.4" height="12.5" viewBox="0 0 16.4 12.5"><rect x="0.300" y="0.300" width="15.800" height="11.600" rx="1.200" fill="#1e9ed6"/><path d="M0.300 0.300 h15.800 v3 l-15.800 5z" fill="#3fc0dd" opacity="0.600"/><rect x="11.500" y="10.800" width="2" height="1.500" fill="#156fa3"/></svg>
<svg class="b" style="left:985px;top:96.5px" width="18" height="17" viewBox="0 0 18 17"><rect x="2.800" y="3.500" width="14.400" height="9.600" rx="0.600" fill="#2592d8"/><path d="M2.800 3.500 h14.400 v2 l-14.400 5z" fill="#45b4e4" opacity="0.700"/><rect x="8.800" y="13.100" width="2.400" height="2.200" fill="#4d9bd0"/><rect x="6.300" y="15.200" width="7.500" height="1.100" fill="#86bfe2"/><circle cx="4.600" cy="4.600" r="4.400" fill="#4a9fdc" stroke="#dcebf7" stroke-width="0.500"/><path d="M2.300 2.300 q2 -1.500 4 0 q-0.500 2 -2.500 2.300z M5.200 5.800 q1.500 0 2 1.500 l-1.500 1z" fill="#bfe3f7"/></svg>
<svg class="b" style="left:1005px;top:100px" width="8" height="12" viewBox="0 0 8 12"><path d="M1.300 1 L5.600 10" stroke="#222" stroke-width="1"/></svg>
<div class="b" style="left:1px;top:117px;width:778px;height:21px;background:#bfccdb;background:linear-gradient(#c2cfdd,#bccad9);"></div>
<div class="b" style="left:1px;top:117px;width:778px;height:1px;background:#e9eef3;"></div>
<div class="b" style="left:1px;top:137px;width:778px;height:1px;background:#6c727a;"></div>
<div class="b" style="left:782px;top:117px;width:776px;height:21px;background:#bfccdb;background:linear-gradient(#c2cfdd,#bccad9);"></div>
<div class="b" style="left:782px;top:117px;width:776px;height:1px;background:#e9eef3;"></div>
<div class="b" style="left:782px;top:137px;width:776px;height:1px;background:#6c727a;"></div>
<div class="b" style="left:1px;top:117px;width:18px;height:20px;background:#f0f0f0;"></div>
<svg class="b" style="left:2.5px;top:120.2px" width="16" height="13" viewBox="0 0 16 13"><rect x="1.200" y="8" width="13.600" height="3.900" rx="0.600" fill="#3b3b3b"/><rect x="1.200" y="8" width="13.600" height="1" fill="#6b6b6b"/><rect x="3.500" y="9.300" width="1.300" height="1" fill="#d8d8d8"/></svg>
<span class="t" id="t19" style="top:120.5px;font-size:12px;color:#000;left:23.68px;transform:scaleX(0.867);transform-origin:left center;">D:</span>
<svg class="b" style="left:37.5px;top:124.5px" width="6" height="8" viewBox="0 0 6 8"><path d="M0.500 0.300 L4.800 4 L0.500 7.700z" fill="#000"/></svg>
<div class="b" style="left:1479px;top:117px;width:79px;height:20px;background:#f0f0f0;"></div>
<div class="b" style="left:1498px;top:118px;width:1px;height:19px;background:#b9b9b9;"></div>
<div class="b" style="left:1499px;top:118px;width:1px;height:19px;background:#fafafa;"></div>
<div class="b" style="left:1518px;top:118px;width:1px;height:19px;background:#b9b9b9;"></div>
<div class="b" style="left:1519px;top:118px;width:1px;height:19px;background:#fafafa;"></div>
<div class="b" style="left:1538px;top:118px;width:1px;height:19px;background:#b9b9b9;"></div>
<div class="b" style="left:1539px;top:118px;width:1px;height:19px;background:#fafafa;"></div>
<svg class="b" style="left:1483px;top:121px" width="12" height="11" viewBox="0 0 12 11"><path d="M0.800 6.400 L5.600 0.800 L10.400 6.400z" fill="#000"/><rect x="0.800" y="7.600" width="9.600" height="2.500" fill="#000"/></svg>
<svg class="b" style="left:1502px;top:121px" width="14" height="11" viewBox="0 0 14 11"><path d="M1.500 1 L5.500 10 M6.500 1 L10.500 10" stroke="#2a3550" stroke-width="0.900"/></svg>
<svg class="b" style="left:1524px;top:121px" width="10" height="11" viewBox="0 0 10 11"><path d="M2 1 L6.500 10" stroke="#2a3550" stroke-width="0.900"/></svg>
<svg class="b" style="left:1544px;top:129px" width="8" height="3" viewBox="0 0 8 3"><rect x="1.500" y="0.800" width="1.200" height="1.400" fill="#222"/><rect x="4.800" y="0.800" width="1.200" height="1.400" fill="#222"/></svg>
<div class="b" style="left:2px;top:138px;width:777px;height:610px;background:#ffffff;"></div>
<div class="b" style="left:782px;top:138px;width:777px;height:610px;background:#ffffff;"></div>
<div class="b" style="left:779px;top:117px;width:3px;height:632px;background:#f0f0f0;"></div>
<div class="b" style="left:1px;top:748px;width:1558px;height:1px;background:#7a7a7a;"></div>
<div class="b" style="left:0px;top:6px;width:1px;height:784px;background:#5c5c5c;"></div>
<div class="b" style="left:0px;top:790px;width:1px;height:42px;background:#858585;"></div>
<div class="b" style="left:1px;top:138px;width:1px;height:610px;background:#b0b0b0;"></div>
<div class="b" style="left:1559px;top:6px;width:1px;height:798px;background:#9a9a9a;"></div>
<div class="b" style="left:1559px;top:804px;width:1px;height:28px;background:#6e6e6e;"></div>
<svg class="b" style="left:9px;top:145px" width="11" height="11.4" viewBox="0 0 11 11.4"><path d="M5.500 0.800 L10.400 6 H7.900 V10.600 H3.100 V6 H0.600z" fill="#39a3ff" stroke="#0b2a70" stroke-width="1.100" stroke-linejoin="round"/><path d="M5.500 2.600 L8 5.200 H6.800 V9.600 H4.400 V5.200 H3z" fill="#9fd6ff"/></svg>
<span class="t" id="t20" style="top:143px;font-size:11px;color:#000;left:31.89px;transform:scaleX(1.135);transform-origin:left center;">Имя</span>
<span class="t" id="t21" style="top:143px;font-size:11px;color:#000;left:211.39px;transform:scaleX(1.053);transform-origin:left center;">Размер</span>
<span class="t" id="t22" style="top:143px;font-size:11px;color:#000;left:263.59px;transform:scaleX(1.094);transform-origin:left center;">Изменено</span>
<span class="t" id="t23" style="top:143px;font-size:11px;color:#000;left:387.29px;transform:scaleX(1.073);transform-origin:left center;">Атр...</span>
<div class="b" style="left:181px;top:140px;width:1px;height:23px;background:#e9e9e9;"></div>
<div class="b" style="left:256px;top:140px;width:1px;height:23px;background:#e9e9e9;"></div>
<div class="b" style="left:377px;top:140px;width:1px;height:23px;background:#e9e9e9;"></div>
<span class="t" id="t24" style="top:143px;font-size:11px;color:#000;left:1043.99px;transform:scaleX(1.094);transform-origin:left center;">Изменено</span>
<span class="t" id="t25" style="top:143px;font-size:11px;color:#000;left:1168.19px;transform:scaleX(1.077);transform-origin:left center;">Атр...</span>
<div class="b" style="left:1157px;top:140px;width:1px;height:23px;background:#e9e9e9;"></div>
<div class="b" style="left:1202px;top:140px;width:1px;height:23px;background:#e9e9e9;"></div>
<div class="b" style="left:23px;top:163px;width:756px;height:19px;background:#808080;"></div>
<svg class="b" style="left:7px;top:165.2px" width="16" height="14" viewBox="0 0 16 14"><g opacity="0.45"><path d="M0.700 3.200 q0 -1.200 1.200 -1.200 h3.600 q0.900 0 1.400 0.800 l0.700 1 h6.300 q1.200 0 1.200 1.200 v7.300 q0 1.200 -1.200 1.200 h-12 q-1.200 0 -1.200 -1.200z" fill="#f0c445" stroke="#b88a1e" stroke-width="1"/><path d="M0.900 6.300 q0 -1 1 -1 h12.200 q1 0 1 1 v6 q0 1 -1 1 h-12.200 q-1 0 -1 -1z" fill="#fce791" stroke="#c79a2c" stroke-width="0.800"/><path d="M1.500 9.500 h13 v2.600 q0 0.700 -0.700 0.700 h-11.600 q-0.700 0 -0.700 -0.700z" fill="#f1c748" opacity="0.800"/></g></svg>
<span class="t" id="t26" style="top:164.6px;font-size:11.5px;color:#f4f4f4;left:25.19px;transform:scaleX(0.915);transform-origin:left center;">$RECYCLE.BIN</span>
<span class="t" id="t27" style="top:164.6px;font-size:11.5px;color:#f4f4f4;left:217.88px;transform:scaleX(0.967);transform-origin:left center;">&lt;DIR&gt;</span>
<span class="t" id="t28" style="top:164.6px;font-size:11.5px;color:#f4f4f4;left:263.58px;transform:scaleX(0.931);transform-origin:left center;">19.01.2022</span>
<span class="t" id="t29" style="top:164.6px;font-size:11.5px;color:#f4f4f4;left:323.78px;transform:scaleX(0.912);transform-origin:left center;">14:01</span>
<span class="t" id="t30" style="top:164.6px;font-size:11.5px;color:#f4f4f4;right:1143.29px;transform:scaleX(0.980);transform-origin:right center;">HS</span>
<svg class="b" style="left:7px;top:184.2px" width="16" height="14" viewBox="0 0 16 14"><g><path d="M0.700 3.200 q0 -1.200 1.200 -1.200 h3.600 q0.900 0 1.400 0.800 l0.700 1 h6.300 q1.200 0 1.200 1.200 v7.300 q0 1.200 -1.200 1.200 h-12 q-1.200 0 -1.200 -1.200z" fill="#f0c445" stroke="#b88a1e" stroke-width="1"/><path d="M0.900 6.300 q0 -1 1 -1 h12.200 q1 0 1 1 v6 q0 1 -1 1 h-12.200 q-1 0 -1 -1z" fill="#fce791" stroke="#c79a2c" stroke-width="0.800"/><path d="M1.500 9.500 h13 v2.600 q0 0.700 -0.700 0.700 h-11.600 q-0.700 0 -0.700 -0.700z" fill="#f1c748" opacity="0.800"/></g></svg>
<span class="t" id="t31" style="top:183.6px;font-size:11.5px;color:#800080;left:25.19px;transform:scaleX(0.910);transform-origin:left center;">000RUS</span>
<span class="t" id="t32" style="top:183.6px;font-size:11.5px;color:#800080;left:217.88px;transform:scaleX(0.967);transform-origin:left center;">&lt;DIR&gt;</span>
<span class="t" id="t33" style="top:183.6px;font-size:11.5px;color:#800080;left:263.58px;transform:scaleX(0.931);transform-origin:left center;">09.09.2022</span>
<span class="t" id="t34" style="top:183.6px;font-size:11.5px;color:#800080;left:323.78px;transform:scaleX(0.940);transform-origin:left center;">11:57</span>
<svg class="b" style="left:7px;top:203.2px" width="16" height="14" viewBox="0 0 16 14"><g><path d="M0.700 3.200 q0 -1.200 1.200 -1.200 h3.600 q0.900 0 1.400 0.800 l0.700 1 h6.300 q1.200 0 1.200 1.200 v7.300 q0 1.200 -1.200 1.200 h-12 q-1.200 0 -1.200 -1.200z" fill="#f0c445" stroke="#b88a1e" stroke-width="1"/><path d="M0.900 6.300 q0 -1 1 -1 h12.200 q1 0 1 1 v6 q0 1 -1 1 h-12.200 q-1 0 -1 -1z" fill="#fce791" stroke="#c79a2c" stroke-width="0.800"/><path d="M1.500 9.500 h13 v2.600 q0 0.700 -0.700 0.700 h-11.600 q-0.700 0 -0.700 -0.700z" fill="#f1c748" opacity="0.800"/></g></svg>
<span class="t" id="t35" style="top:202.6px;font-size:11.5px;color:#800080;left:25.19px;transform:scaleX(1.050);transform-origin:left center;">AllDupPortable</span>
<span class="t" id="t36" style="top:202.6px;font-size:11.5px;color:#800080;left:217.88px;transform:scaleX(0.967);transform-origin:left center;">&lt;DIR&gt;</span>
<span class="t" id="t37" style="top:202.6px;font-size:11.5px;color:#800080;left:263.58px;transform:scaleX(0.931);transform-origin:left center;">08.03.2022</span>
<span class="t" id="t38" style="top:202.6px;font-size:11.5px;color:#800080;left:323.78px;transform:scaleX(0.912);transform-origin:left center;">16:03</span>
<svg class="b" style="left:9.3px;top:221.5px" width="12" height="16" viewBox="0 0 12 16"><path d="M6 0.500 v10.500 M1.500 6.500 l4.500 4.500 l4.500 -4.500" fill="none" stroke="#18a88c" stroke-width="1.700" stroke-linecap="round" stroke-linejoin="round"/><path d="M0.300 14.800 h11.400" stroke="#18a88c" stroke-width="1.500"/></svg>
<span class="t" id="t39" style="top:221.6px;font-size:11.5px;color:#800080;left:25.19px;transform:scaleX(1.047);transform-origin:left center;">Downloads</span>
<span class="t" id="t40" style="top:221.6px;font-size:11.5px;color:#800080;left:217.88px;transform:scaleX(0.967);transform-origin:left center;">&lt;DIR&gt;</span>
<span class="t" id="t41" style="top:221.6px;font-size:11.5px;color:#800080;left:263.58px;transform:scaleX(0.931);transform-origin:left center;">09.09.2022</span>
<span class="t" id="t42" style="top:221.6px;font-size:11.5px;color:#800080;left:323.78px;transform:scaleX(0.912);transform-origin:left center;">17:02</span>
<span class="t" id="t43" style="top:221.6px;font-size:11.5px;color:#800080;right:1143.29px;transform:scaleX(0.946);transform-origin:right center;">R</span>
<svg class="b" style="left:7px;top:241.2px" width="16" height="14" viewBox="0 0 16 14"><g><path d="M0.700 3.200 q0 -1.200 1.200 -1.200 h3.600 q0.900 0 1.400 0.800 l0.700 1 h6.300 q1.200 0 1.200 1.200 v7.300 q0 1.200 -1.200 1.200 h-12 q-1.200 0 -1.200 -1.200z" fill="#f0c445" stroke="#b88a1e" stroke-width="1"/><path d="M0.900 6.300 q0 -1 1 -1 h12.200 q1 0 1 1 v6 q0 1 -1 1 h-12.200 q-1 0 -1 -1z" fill="#fce791" stroke="#c79a2c" stroke-width="0.800"/><path d="M1.500 9.500 h13 v2.600 q0 0.700 -0.700 0.700 h-11.600 q-0.700 0 -0.700 -0.700z" fill="#f1c748" opacity="0.800"/></g></svg>
<span class="t" id="t44" style="top:240.6px;font-size:11.5px;color:#800080;left:25.19px;transform:scaleX(1.012);transform-origin:left center;">Firefox</span>
<span class="t" id="t45" style="top:240.6px;font-size:11.5px;color:#800080;left:217.88px;transform:scaleX(0.967);transform-origin:left center;">&lt;DIR&gt;</span>
<span class="t" id="t46" style="top:240.6px;font-size:11.5px;color:#800080;left:263.58px;transform:scaleX(0.931);transform-origin:left center;">17.01.2022</span>
<span class="t" id="t47" style="top:240.6px;font-size:11.5px;color:#800080;left:323.78px;transform:scaleX(0.912);transform-origin:left center;">19:23</span>
<svg class="b" style="left:7px;top:260.2px" width="16" height="14" viewBox="0 0 16 14"><g><path d="M0.700 3.200 q0 -1.200 1.200 -1.200 h3.600 q0.900 0 1.400 0.800 l0.700 1 h6.300 q1.200 0 1.200 1.200 v7.300 q0 1.200 -1.200 1.200 h-12 q-1.200 0 -1.200 -1.200z" fill="#f0c445" stroke="#b88a1e" stroke-width="1"/><path d="M0.900 6.300 q0 -1 1 -1 h12.200 q1 0 1 1 v6 q0 1 -1 1 h-12.200 q-1 0 -1 -1z" fill="#fce791" stroke="#c79a2c" stroke-width="0.800"/><path d="M1.500 9.500 h13 v2.600 q0 0.700 -0.700 0.700 h-11.600 q-0.700 0 -0.700 -0.700z" fill="#f1c748" opacity="0.800"/></g></svg>
<span class="t" id="t48" style="top:259.6px;font-size:11.5px;color:#800080;left:25.19px;transform:scaleX(1.012);transform-origin:left center;">Lenouser</span>
<span class="t" id="t49" style="top:259.6px;font-size:11.5px;color:#800080;left:217.88px;transform:scaleX(0.967);transform-origin:left center;">&lt;DIR&gt;</span>
<span class="t" id="t50" style="top:259.6px;font-size:11.5px;color:#800080;left:263.58px;transform:scaleX(0.931);transform-origin:left center;">08.04.2022</span>
<span class="t" id="t51" style="top:259.6px;font-size:11.5px;color:#800080;left:323.78px;transform:scaleX(0.912);transform-origin:left center;">23:41</span>
<svg class="b" style="left:7px;top:279.2px" width="16" height="14" viewBox="0 0 16 14"><g><path d="M0.700 3.200 q0 -1.200 1.200 -1.200 h3.600 q0.900 0 1.400 0.800 l0.700 1 h6.300 q1.200 0 1.200 1.200 v7.300 q0 1.200 -1.200 1.200 h-12 q-1.200 0 -1.200 -1.200z" fill="#f0c445" stroke="#b88a1e" stroke-width="1"/><path d="M0.900 6.300 q0 -1 1 -1 h12.200 q1 0 1 1 v6 q0 1 -1 1 h-12.200 q-1 0 -1 -1z" fill="#fce791" stroke="#c79a2c" stroke-width="0.800"/><path d="M1.500 9.500 h13 v2.600 q0 0.700 -0.700 0.700 h-11.600 q-0.700 0 -0.700 -0.700z" fill="#f1c748" opacity="0.800"/></g></svg>
<span class="t" id="t52" style="top:278.6px;font-size:11.5px;color:#800080;left:25.19px;transform:scaleX(1.010);transform-origin:left center;">Program Files</span>
<span class="t" id="t53" style="top:278.6px;font-size:11.5px;color:#800080;left:217.88px;transform:scaleX(0.967);transform-origin:left center;">&lt;DIR&gt;</span>
<span class="t" id="t54" style="top:278.6px;font-size:11.5px;color:#800080;left:263.58px;transform:scaleX(0.931);transform-origin:left center;">07.09.2022</span>
<span class="t" id="t55" style="top:278.6px;font-size:11.5px;color:#800080;left:323.78px;transform:scaleX(0.912);transform-origin:left center;">12:08</span>
<svg class="b" style="left:7px;top:298.2px" width="16" height="14" viewBox="0 0 16 14"><g opacity="0.45"><path d="M0.700 3.200 q0 -1.200 1.200 -1.200 h3.600 q0.900 0 1.400 0.800 l0.700 1 h6.300 q1.200 0 1.200 1.200 v7.300 q0 1.200 -1.200 1.200 h-12 q-1.200 0 -1.200 -1.200z" fill="#f0c445" stroke="#b88a1e" stroke-width="1"/><path d="M0.900 6.300 q0 -1 1 -1 h12.200 q1 0 1 1 v6 q0 1 -1 1 h-12.200 q-1 0 -1 -1z" fill="#fce791" stroke="#c79a2c" stroke-width="0.800"/><path d="M1.500 9.500 h13 v2.600 q0 0.700 -0.700 0.700 h-11.600 q-0.700 0 -0.700 -0.700z" fill="#f1c748" opacity="0.800"/></g></svg>
<span class="t" id="t56" style="top:297.6px;font-size:11.5px;color:#800080;left:25.19px;transform:scaleX(1.046);transform-origin:left center;">System Volume Information</span>
<span class="t" id="t57" style="top:297.6px;font-size:11.5px;color:#800080;left:217.88px;transform:scaleX(0.967);transform-origin:left center;">&lt;DIR&gt;</span>
<span class="t" id="t58" style="top:297.6px;font-size:11.5px;color:#800080;left:263.58px;transform:scaleX(0.931);transform-origin:left center;">14.01.2022</span>
<span class="t" id="t59" style="top:297.6px;font-size:11.5px;color:#800080;left:323.78px;transform:scaleX(0.914);transform-origin:left center;">0:27</span>
<span class="t" id="t60" style="top:297.6px;font-size:11.5px;color:#800080;right:1143.29px;transform:scaleX(0.980);transform-origin:right center;">HS</span>
<svg class="b" style="left:7px;top:317.2px" width="16" height="14" viewBox="0 0 16 14"><g><path d="M0.700 3.200 q0 -1.200 1.200 -1.200 h3.600 q0.900 0 1.400 0.800 l0.700 1 h6.300 q1.200 0 1.200 1.200 v7.300 q0 1.200 -1.200 1.200 h-12 q-1.200 0 -1.200 -1.200z" fill="#f0c445" stroke="#b88a1e" stroke-width="1"/><path d="M0.900 6.300 q0 -1 1 -1 h12.200 q1 0 1 1 v6 q0 1 -1 1 h-12.200 q-1 0 -1 -1z" fill="#fce791" stroke="#c79a2c" stroke-width="0.800"/><path d="M1.500 9.500 h13 v2.600 q0 0.700 -0.700 0.700 h-11.600 q-0.700 0 -0.700 -0.700z" fill="#f1c748" opacity="0.800"/></g></svg>
<span class="t" id="t61" style="top:316.6px;font-size:11.5px;color:#800080;left:25.19px;transform:scaleX(1.028);transform-origin:left center;">VirtualBox VMs</span>
<span class="t" id="t62" style="top:316.6px;font-size:11.5px;color:#800080;left:217.88px;transform:scaleX(0.967);transform-origin:left center;">&lt;DIR&gt;</span>
<span class="t" id="t63" style="top:316.6px;font-size:11.5px;color:#800080;left:263.58px;transform:scaleX(0.931);transform-origin:left center;">03.09.2022</span>
<span class="t" id="t64" style="top:316.6px;font-size:11.5px;color:#800080;left:323.78px;transform:scaleX(0.912);transform-origin:left center;">10:58</span>
<svg class="b" style="left:7px;top:336.2px" width="16" height="14" viewBox="0 0 16 14"><g><path d="M0.700 3.200 q0 -1.200 1.200 -1.200 h3.600 q0.900 0 1.400 0.800 l0.700 1 h6.300 q1.200 0 1.200 1.200 v7.300 q0 1.200 -1.200 1.200 h-12 q-1.200 0 -1.200 -1.200z" fill="#f0c445" stroke="#b88a1e" stroke-width="1"/><path d="M0.900 6.300 q0 -1 1 -1 h12.200 q1 0 1 1 v6 q0 1 -1 1 h-12.200 q-1 0 -1 -1z" fill="#fce791" stroke="#c79a2c" stroke-width="0.800"/><path d="M1.500 9.500 h13 v2.600 q0 0.700 -0.700 0.700 h-11.600 q-0.700 0 -0.700 -0.700z" fill="#f1c748" opacity="0.800"/></g></svg>
<span class="t" id="t65" style="top:335.6px;font-size:11.5px;color:#800080;left:25.19px;transform:scaleX(1.047);transform-origin:left center;">Шрифты</span>
<span class="t" id="t66" style="top:335.6px;font-size:11.5px;color:#800080;left:217.88px;transform:scaleX(0.967);transform-origin:left center;">&lt;DIR&gt;</span>
<span class="t" id="t67" style="top:335.6px;font-size:11.5px;color:#800080;left:263.58px;transform:scaleX(0.931);transform-origin:left center;">20.06.2022</span>
<span class="t" id="t68" style="top:335.6px;font-size:11.5px;color:#800080;left:323.78px;transform:scaleX(0.912);transform-origin:left center;">12:04</span>
<svg class="b" style="left:8px;top:353.7px" width="14" height="16" viewBox="0 0 14 16"><path d="M1 0.600 h8.500 l3 3 v11.800 h-11.500z" fill="#f7e392" stroke="#c9a645" stroke-width="0.800"/><path d="M9.500 0.600 v3 h3" fill="#fff6c8" stroke="#c9a645" stroke-width="0.600"/><path d="M6.300 1 v13" stroke="#8a7a55" stroke-width="2.200" stroke-dasharray="1 1"/><rect x="5" y="9.500" width="2.800" height="4.200" fill="#d9d9d9" stroke="#777" stroke-width="0.500"/><path d="M12 7 v8.200 h1.500 v-7z" fill="#bfbfbf" stroke="#8a8a8a" stroke-width="0.400"/></svg>
<span class="t" id="t69" style="top:354.6px;font-size:11.5px;color:#000;left:25.19px;transform:scaleX(0.979);transform-origin:left center;">User Data.rar</span>
<span class="t" id="t70" style="top:354.6px;font-size:11.5px;color:#000;right:1308.88px;transform:scaleX(0.942);transform-origin:right center;">537 706 829</span>
<span class="t" id="t71" style="top:354.6px;font-size:11.5px;color:#000;left:263.58px;transform:scaleX(0.931);transform-origin:left center;">16.03.2022</span>
<span class="t" id="t72" style="top:354.6px;font-size:11.5px;color:#000;left:323.78px;transform:scaleX(0.912);transform-origin:left center;">23:01</span>
<span class="t" id="t73" style="top:354.6px;font-size:11.5px;color:#000;right:1143.29px;transform:scaleX(1.103);transform-origin:right center;">A</span>
<svg class="b" style="left:8px;top:372.7px" width="14" height="16" viewBox="0 0 14 16"><path d="M1 0.600 h8.500 l3 3 v11.800 h-11.500z" fill="#f7e392" stroke="#c9a645" stroke-width="0.800"/><path d="M9.500 0.600 v3 h3" fill="#fff6c8" stroke="#c9a645" stroke-width="0.600"/><path d="M6.300 1 v13" stroke="#8a7a55" stroke-width="2.200" stroke-dasharray="1 1"/><rect x="5" y="9.500" width="2.800" height="4.200" fill="#d9d9d9" stroke="#777" stroke-width="0.500"/><path d="M12 7 v8.200 h1.500 v-7z" fill="#bfbfbf" stroke="#8a8a8a" stroke-width="0.400"/></svg>
<span class="t" id="t74" style="top:373.6px;font-size:11.5px;color:#000;left:25.19px;transform:scaleX(1.017);transform-origin:left center;">Wondershare UniConverter ...</span>
<span class="t" id="t75" style="top:373.6px;font-size:11.5px;color:#000;right:1308.88px;transform:scaleX(0.976);transform-origin:right center;">11 919</span>
<span class="t" id="t76" style="top:373.6px;font-size:11.5px;color:#000;left:263.58px;transform:scaleX(0.931);transform-origin:left center;">04.09.2022</span>
<span class="t" id="t77" style="top:373.6px;font-size:11.5px;color:#000;left:323.78px;transform:scaleX(0.912);transform-origin:left center;">22:55</span>
<span class="t" id="t78" style="top:373.6px;font-size:11.5px;color:#000;right:1143.29px;transform:scaleX(1.103);transform-origin:right center;">A</span>
<svg class="b" style="left:7.9px;top:392.8px" width="14.4" height="14.4" viewBox="0 0 14 14"><circle cx="7" cy="7" r="6.800" fill="#16a33a"/><path d="M3.600 4.300 v3.500 q0 3 3.400 3 q2.600 0 2.600 -3 v-4.500 M9.600 7 v4.500" fill="none" stroke="#fff" stroke-width="1.900" stroke-linecap="round"/><path d="M1.200 3 l3 -0.300 M4.200 13 l0.500 -2" stroke="#fff" stroke-width="0.800"/></svg>
<span class="t" id="t79" style="top:392.6px;font-size:11.5px;color:#000;left:25.19px;transform:scaleX(1.017);transform-origin:left center;">Wondershare UniConverter ...</span>
<span class="t" id="t80" style="top:392.6px;font-size:11.5px;color:#000;right:1308.88px;transform:scaleX(0.976);transform-origin:right center;">11 645</span>
<span class="t" id="t81" style="top:392.6px;font-size:11.5px;color:#000;left:263.58px;transform:scaleX(0.931);transform-origin:left center;">04.09.2022</span>
<span class="t" id="t82" style="top:392.6px;font-size:11.5px;color:#000;left:323.78px;transform:scaleX(0.912);transform-origin:left center;">22:48</span>
<span class="t" id="t83" style="top:392.6px;font-size:11.5px;color:#000;right:1143.29px;transform:scaleX(1.103);transform-origin:right center;">A</span>
<span class="t" id="t84" style="top:164.6px;font-size:11.5px;color:#800080;left:1104.18px;transform:scaleX(0.940);transform-origin:left center;">11:19</span>
<span class="t" id="t85" style="top:164.6px;font-size:11.5px;color:#800080;right:362.88px;transform:scaleX(0.980);transform-origin:right center;">HS</span>
<span class="t" id="t86" style="top:183.6px;font-size:11.5px;color:#800080;left:1104.18px;transform:scaleX(0.912);transform-origin:left center;">12:23</span>
<span class="t" id="t87" style="top:202.6px;font-size:11.5px;color:#800080;left:1104.18px;transform:scaleX(0.912);transform-origin:left center;">22:20</span>
<span class="t" id="t88" style="top:221.6px;font-size:11.5px;color:#800080;left:1104.18px;transform:scaleX(0.912);transform-origin:left center;">12:30</span>
<span class="t" id="t89" style="top:240.6px;font-size:11.5px;color:#800080;left:1104.18px;transform:scaleX(0.912);transform-origin:left center;">17:01</span>
<span class="t" id="t90" style="top:240.6px;font-size:11.5px;color:#800080;right:362.88px;transform:scaleX(0.946);transform-origin:right center;">R</span>
<span class="t" id="t91" style="top:259.6px;font-size:11.5px;color:#800080;left:1104.18px;transform:scaleX(0.940);transform-origin:left center;">11:51</span>
<span class="t" id="t92" style="top:278.6px;font-size:11.5px;color:#800080;left:1104.18px;transform:scaleX(0.912);transform-origin:left center;">17:22</span>
<span class="t" id="t93" style="top:297.6px;font-size:11.5px;color:#800080;left:1104.18px;transform:scaleX(0.912);transform-origin:left center;">21:57</span>
<span class="t" id="t94" style="top:316.6px;font-size:11.5px;color:#800080;left:1104.18px;transform:scaleX(0.912);transform-origin:left center;">21:42</span>
<span class="t" id="t95" style="top:316.6px;font-size:11.5px;color:#800080;right:362.88px;transform:scaleX(0.980);transform-origin:right center;">HS</span>
<span class="t" id="t96" style="top:335.6px;font-size:11.5px;color:#800080;left:1104.18px;transform:scaleX(0.912);transform-origin:left center;">17:15</span>
<span class="t" id="t97" style="top:354.6px;font-size:11.5px;color:#800080;left:1104.18px;transform:scaleX(0.912);transform-origin:left center;">12:10</span>
<span class="t" id="t98" style="top:373.6px;font-size:11.5px;color:#800080;left:1104.18px;transform:scaleX(0.912);transform-origin:left center;">20:50</span>
<span class="t" id="t99" style="top:392.6px;font-size:11.5px;color:#000;left:1104.18px;transform:scaleX(0.912);transform-origin:left center;">15:55</span>
<span class="t" id="t100" style="top:392.6px;font-size:11.5px;color:#000;right:362.88px;transform:scaleX(1.103);transform-origin:right center;">A</span>
<span class="t" id="t101" style="top:411.6px;font-size:11.5px;color:#000;left:1104.18px;transform:scaleX(0.914);transform-origin:left center;">0:15</span>
<span class="t" id="t102" style="top:411.6px;font-size:11.5px;color:#000;right:362.88px;transform:scaleX(1.103);transform-origin:right center;">A</span>
<div class="b" style="left:1px;top:749px;width:1558px;height:20px;background:#f0f0f0;"></div>
<span class="t" id="t103" style="top:750.3px;font-size:11px;color:#111;left:6.09px;transform:scaleX(0.955);transform-origin:left center;">* $RECYCLE.BIN</span>
<span class="t" id="t104" style="top:750.3px;font-size:11px;color:#111;left:101.39px;transform:scaleX(0.969);transform-origin:left center;">&lt;DIR&gt;</span>
<span class="t" id="t105" style="top:750.3px;font-size:11px;color:#111;left:138.89px;transform:scaleX(0.965);transform-origin:left center;">19.01.2022</span>
<span class="t" id="t106" style="top:750.3px;font-size:11px;color:#111;left:198.89px;transform:scaleX(0.938);transform-origin:left center;">14:01</span>
<span class="t" id="t107" style="top:750.3px;font-size:11px;color:#111;left:231.09px;transform:scaleX(0.977);transform-origin:left center;">HS</span>
<span class="t" id="t108" style="top:750.3px;font-size:11px;color:#111;left:787.89px;transform:scaleX(0.955);transform-origin:left center;">* $RECYCLE.BIN</span>
<span class="t" id="t109" style="top:750.3px;font-size:11px;color:#111;left:883.19px;transform:scaleX(0.969);transform-origin:left center;">&lt;DIR&gt;</span>
<span class="t" id="t110" style="top:750.3px;font-size:11px;color:#111;left:920.69px;transform:scaleX(0.965);transform-origin:left center;">15.07.2022</span>
<span class="t" id="t111" style="top:750.3px;font-size:11px;color:#111;left:980.69px;transform:scaleX(0.967);transform-origin:left center;">11:19</span>
<span class="t" id="t112" style="top:750.3px;font-size:11px;color:#111;left:1012.89px;transform:scaleX(0.977);transform-origin:left center;">HS</span>
<div class="b" style="left:1px;top:769px;width:1558px;height:1px;background:#8c8c8c;"></div>
<div class="b" style="left:1px;top:770px;width:1558px;height:19px;background:#ffffff;"></div>
<div class="b" style="left:1px;top:789px;width:1558px;height:1px;background:#7b7b7b;"></div>
<span class="t" id="t113" style="top:771.2px;font-size:11px;color:#111;left:4.09px;transform:scaleX(1.080);transform-origin:left center;">D:\&gt;</span>
<svg class="b" style="left:1544px;top:776px" width="12" height="8" viewBox="0 0 12 8"><path d="M1.800 2 L6 6.200 L10.200 2" fill="none" stroke="#666" stroke-width="1"/></svg>
<div class="b" style="left:1px;top:790px;width:1558px;height:23px;background:#f0f0f0;"></div>
<div class="b" style="left:1px;top:813px;width:1558px;height:1px;background:#d0d0d0;"></div>
<svg class="b" style="left:4.5px;top:793px" width="16.5" height="16.5" viewBox="0 0 16.5 16.5"><circle cx="8" cy="8" r="7.300" fill="#e9eefc" stroke="#b9c7ea" stroke-width="0.600"/><circle cx="8" cy="8" r="6" fill="#2b5bd3"/><path d="M5.800 6.300 q0 -2.300 2.300 -2.300 q2.300 0 2.300 2 q0 1.300 -1.300 2 q-1 0.600 -1 1.600" fill="none" stroke="#fff" stroke-width="1.700" stroke-linecap="round"/><circle cx="8.100" cy="11.900" r="1" fill="#fff"/></svg>
<span class="t" id="t114" style="top:793.2px;font-size:11px;color:#111;left:22.69px;transform:scaleX(0.987);transform-origin:left center;">1 Помощь</span>
<svg class="b" style="left:159.2px;top:793px" width="16.5" height="16.5" viewBox="0 0 16.5 16.5"><path d="M0.800 3.500 h8.500 v11.500 h-8.500z" fill="#f3f5f7" stroke="#a2a7ad" stroke-width="0.800"/><circle cx="10" cy="4.800" r="3" fill="#7a6a55"/><path d="M7.300 3.600 q2.700 -3 5.400 0 l0.800 0.600 h-7z" fill="#4d5a45"/><path d="M4.500 15.500 q0.500 -6.500 5.500 -6.500 q5 0 5.500 6.500z" fill="#4fae7d"/><path d="M9 9.300 l1 2.700 l1 -2.700z" fill="#e9f5ee"/></svg>
<span class="t" id="t115" style="top:793.2px;font-size:11px;color:#111;left:176.69px;transform:scaleX(1.006);transform-origin:left center;">2 Меню пользователя</span>
<svg class="b" style="left:315px;top:793px" width="16.5" height="16.5" viewBox="0 0 16.5 16.5"><path d="M3.500 0.800 h8 l3.500 3.500 v10.900 h-11.500z" fill="#fbfbfb" stroke="#8e8e8e" stroke-width="0.800"/><path d="M11.500 0.800 v3.500 h3.500" fill="none" stroke="#8e8e8e" stroke-width="0.700"/><circle cx="7.300" cy="8.300" r="3.600" fill="#cfe2fa" stroke="#4b7fd0" stroke-width="1"/><path d="M4.800 11 L0.800 15.200" stroke="#6b6b6b" stroke-width="1.700" stroke-linecap="round"/></svg>
<span class="t" id="t116" style="top:793.2px;font-size:11px;color:#111;left:332.59px;transform:scaleX(1.017);transform-origin:left center;">3 Просмотр</span>
<svg class="b" style="left:470.7px;top:793px" width="16.5" height="16.5" viewBox="0 0 16.5 16.5"><path d="M0.800 2.500 h8.500 l3.500 3.500 v9.200 h-12z" fill="#fbfbfb" stroke="#8e8e8e" stroke-width="0.800"/><path d="M4 13.800 L5 10.800 L13.300 2.300 L15.300 4.300 L7 12.800z" fill="#f0b548" stroke="#a8741c" stroke-width="0.600"/><path d="M13.300 2.300 l1 -1 q1 -0.500 1.700 0.300 q0.700 0.900 0 1.700 l-0.700 1z" fill="#d8455f"/><path d="M4 13.800 l0.400 -1.200 l0.800 0.800z" fill="#222"/></svg>
<span class="t" id="t117" style="top:793.2px;font-size:11px;color:#111;left:489.19px;transform:scaleX(1.004);transform-origin:left center;">4 Редактировать</span>
<svg class="b" style="left:626.7px;top:793px" width="16.5" height="16.5" viewBox="0 0 16.5 16.5"><path d="M2.500 0.800 h5.500 l2.500 2.500 v8 h-8z" fill="#fbfbfb" stroke="#8e8e8e" stroke-width="0.700"/><path d="M4 4 h4 M4 6 h4 M4 8 h4" stroke="#5b93d8" stroke-width="0.700"/><path d="M7.500 4.800 h5 l2.700 2.700 v8 h-7.700z" fill="#fbfbfb" stroke="#8e8e8e" stroke-width="0.700"/><path d="M9 8.500 h4.500 M9 10.500 h4.500 M9 12.500 h4.500" stroke="#5b93d8" stroke-width="0.700"/><path d="M3 8.500 h3 v2.500 h2.500 v3 h-2.500 v2.500 h-3 v-2.500 h-2.500 v-3 h2.500z" fill="#4cc12e" stroke="#22881a" stroke-width="0.600"/></svg>
<span class="t" id="t118" style="top:793.2px;font-size:11px;color:#111;left:644.89px;">5 Копировать</span>
<svg class="b" style="left:782.7px;top:793px" width="16.5" height="16.5" viewBox="0 0 16.5 16.5"><path d="M2.500 0.800 h5.500 l2.500 2.500 v8 h-8z" fill="#fbfbfb" stroke="#a5a5a5" stroke-width="0.700"/><path d="M4 4 h4 M4 6 h4" stroke="#bdbdbd" stroke-width="0.700"/><path d="M7.500 4.800 h5 l2.700 2.700 v8 h-7.700z" fill="#fbfbfb" stroke="#9a9a9a" stroke-width="0.700"/><path d="M9 8.500 h4.500" stroke="#5b93d8" stroke-width="0.700"/><path d="M1 9.500 h6 v-2.800 l5.500 4.800 l-5.500 4.800 v-2.800 h-6z" fill="#4cc12e" stroke="#22881a" stroke-width="0.600" stroke-linejoin="round"/></svg>
<span class="t" id="t119" style="top:793.2px;font-size:11px;color:#111;left:801.59px;transform:scaleX(0.990);transform-origin:left center;">6 Переместить</span>
<svg class="b" style="left:938px;top:793px" width="16.5" height="16.5" viewBox="0 0 16.5 16.5"><path d="M0.800 6 q0 -0.800 0.800 -0.900 l4.500 -0.500 l1 0.900 l5 -0.500 q0.900 0 0.900 0.800 l0.300 7 q0 0.800 -0.800 0.800 l-10.800 -0.400 q-0.800 0 -0.800 -0.800z" fill="#eed873" stroke="#d9bf55" stroke-width="0.600"/><path d="M11 8.500 h2.200 v2.200 h2.300 v2.300 h-2.300 v2.300 h-2.200 v-2.300 h-2.300 v-2.300 h2.300z" fill="#4cc12e" stroke="#22881a" stroke-width="0.500"/></svg>
<span class="t" id="t120" style="top:793.2px;font-size:11px;color:#111;left:956.59px;">7 Создать папку</span>
<svg class="b" style="left:1093.5px;top:793px" width="16.5" height="16.5" viewBox="0 0 16.5 16.5"><path d="M8.500 8 l0.900 6.800 q0.100 0.700 0.900 0.700 h3.400 q0.800 0 0.900 -0.700 l0.900 -6.800z" fill="#dfe8f1" stroke="#7f96ae" stroke-width="0.700"/><path d="M10.800 11 l1.200 -1.200 l1.200 1.200 M13.300 12.200 l0 1.600 l-1.600 0" fill="none" stroke="#2f7fe0" stroke-width="1"/><path d="M1 1 Q4.500 3 6 5.500 Q7.500 3 10 0.800 M1.300 9.500 Q3.500 5.500 6 5.500 Q8 5.700 10 8" fill="none" stroke="#d8261c" stroke-width="1.700" stroke-linecap="round"/></svg>
<span class="t" id="t121" style="top:793.2px;font-size:11px;color:#111;left:1112.19px;">8 Удалить</span>
<svg class="b" style="left:1250px;top:793px" width="16.5" height="16.5" viewBox="0 0 16.5 16.5"><ellipse cx="8" cy="5" rx="7.800" ry="2.800" fill="#1a1a1a"/><path d="M3.400 5 l0.700 9 q0.100 1.600 3.900 1.600 q3.800 0 3.900 -1.600 l0.700 -9z" fill="#0d0d0d"/><ellipse cx="8" cy="4.200" rx="4.700" ry="1.500" fill="#3c3c3c"/><path d="M3.900 10.500 q4.100 1.600 8.200 0 l-0.200 2.200 q-3.900 1.600 -7.800 0z" fill="#4a3520"/></svg>
<span class="t" id="t122" style="top:793.2px;font-size:11px;color:#111;left:1268.09px;">9 Контейнер</span>
<svg class="b" style="left:1406.5px;top:793px" width="16.5" height="16.5" viewBox="0 0 16.5 16.5"><rect x="0.900" y="1.200" width="13.400" height="13.400" rx="1.800" fill="#e24c2b" stroke="#ad321a" stroke-width="0.900"/><circle cx="7.600" cy="7.900" r="3.900" fill="none" stroke="#fff" stroke-width="1.600"/><path d="M7.600 5.800 v4.200" stroke="#fff" stroke-width="1.400" stroke-linecap="round"/></svg>
<span class="t" id="t123" style="top:793.2px;font-size:11px;color:#111;left:1424.89px;transform:scaleX(0.961);transform-origin:left center;">10 Выход</span>
<div class="b" style="left:1px;top:814px;width:1558px;height:24px;background:#f0f0f0;border-radius:0 0 7px 7px;"></div>
<span class="t" id="t124" style="top:817.6px;font-size:11px;color:#111;left:6.09px;transform:scaleX(0.955);transform-origin:left center;">* $RECYCLE.BIN</span>
<span class="t" id="t125" style="top:817.6px;font-size:11px;color:#111;left:101.39px;transform:scaleX(0.969);transform-origin:left center;">&lt;DIR&gt;</span>
<span class="t" id="t126" style="top:817.6px;font-size:11px;color:#111;left:138.89px;transform:scaleX(0.965);transform-origin:left center;">19.01.2022</span>
<span class="t" id="t127" style="top:817.6px;font-size:11px;color:#111;left:198.89px;transform:scaleX(0.938);transform-origin:left center;">14:01</span>
<span class="t" id="t128" style="top:817.6px;font-size:11px;color:#111;left:231.09px;transform:scaleX(0.977);transform-origin:left center;">HS</span>
<div class="b" style="left:1145px;top:815px;width:1px;height:23px;background:#cfcfcf;"></div>
<div class="b" style="left:1144px;top:815px;width:1px;height:23px;background:#fbfbfb;"></div>
<div class="b" style="left:1250px;top:815px;width:1px;height:23px;background:#cfcfcf;"></div>
<div class="b" style="left:1249px;top:815px;width:1px;height:23px;background:#fbfbfb;"></div>
<div class="b" style="left:1357px;top:815px;width:1px;height:23px;background:#cfcfcf;"></div>
<div class="b" style="left:1356px;top:815px;width:1px;height:23px;background:#fbfbfb;"></div>
<div class="b" style="left:1439px;top:815px;width:1px;height:23px;background:#cfcfcf;"></div>
<div class="b" style="left:1438px;top:815px;width:1px;height:23px;background:#fbfbfb;"></div>
<div class="b" style="left:1491px;top:815px;width:1px;height:23px;background:#cfcfcf;"></div>
<div class="b" style="left:1490px;top:815px;width:1px;height:23px;background:#fbfbfb;"></div>
<div class="b" style="left:1515px;top:815px;width:1px;height:23px;background:#cfcfcf;"></div>
<div class="b" style="left:1514px;top:815px;width:1px;height:23px;background:#fbfbfb;"></div>
<span class="t" id="t129" style="top:817.6px;font-size:11px;color:#111;left:1149.89px;transform:scaleX(0.981);transform-origin:left center;">50,63 GB свободно</span>
<span class="t" id="t130" style="top:817.6px;font-size:11px;color:#111;left:1256.39px;transform:scaleX(0.972);transform-origin:left center;">RAM 23,89% своб...</span>
<span class="t" id="t131" style="top:817.6px;font-size:11px;color:#111;left:1362.09px;transform:scaleX(0.988);transform-origin:left center;">09.09.2022</span>
<span class="t" id="t132" style="top:817.6px;font-size:11px;color:#111;left:1444.49px;transform:scaleX(0.971);transform-origin:left center;">17:06</span>
<div class="b" style="left:412px;top:109px;width:686px;height:643px;background:#f0f0f0;border-radius:8px;box-shadow:0 14px 30px 0 rgba(0,0,0,0.34), 0 3px 26px 3px rgba(0,0,0,0.15), 0 0 3px rgba(0,0,0,0.22);"></div>
<div class="b" style="left:412px;top:109px;width:686px;height:643px;border-radius:8px;overflow:hidden;">
<div class="b" style="left:-412px;top:-109px;width:1560px;height:839px;">
<div class="b" style="left:412px;top:109px;width:686px;height:31px;background:#1474b6;"></div>
<svg class="b" style="left:420px;top:115px" width="18" height="18" viewBox="0 0 18 18"><path d="M8.500 9 L2.500 15.300" stroke="#e6ecf2" stroke-width="1.300" stroke-linecap="round"/><circle cx="10.900" cy="6.300" r="4.300" fill="#eaf3fc" stroke="#cfdbe8" stroke-width="0.900"/></svg>
<span class="t" id="t133" style="top:116.5px;font-size:12px;color:#ffffff;left:441.88px;transform:scaleX(1.024);transform-origin:left center;">Find</span>
<svg class="b" style="left:974px;top:116px" width="112" height="16" viewBox="0 0 112 16"><path d="M4 8.500 h10" stroke="#fff" stroke-width="1"/><rect x="50" y="3.500" width="9" height="9" rx="0.800" fill="none" stroke="#fff" stroke-width="1.100"/><path d="M95 3 l10 10 M105 3 l-10 10" stroke="#fff" stroke-width="1.100"/></svg>
<span class="t" id="t134" style="top:142px;font-size:12px;color:#000;left:425.18px;transform:scaleX(1.004);transform-origin:left center;">Файлы</span>
<span class="t" id="t135" style="top:142px;font-size:12px;color:#000;left:489.08px;transform:scaleX(0.973);transform-origin:left center;">Редактировать</span>
<span class="t" id="t136" style="top:142px;font-size:12px;color:#000;left:594.88px;transform:scaleX(0.962);transform-origin:left center;">Вид</span>
<span class="t" id="t137" style="top:142px;font-size:12px;color:#000;left:640.68px;transform:scaleX(1.021);transform-origin:left center;">Команды</span>
<span class="t" id="t138" style="top:142px;font-size:12px;color:#000;left:717.68px;transform:scaleX(1.038);transform-origin:left center;">Настройки</span>
<div class="b" style="left:413px;top:160px;width:684px;height:1px;background:#6e6e6e;"></div>
<div class="b" style="left:413px;top:204px;width:684px;height:1px;background:#5a5a5a;"></div>
<svg class="b" style="left:412px;top:161px" width="686" height="44" viewBox="412 161 686 44"><line x1="429.574" y1="182.301" x2="420" y2="194.3" stroke="#777777" stroke-width="2.8" stroke-linecap="round"/><line x1="429.574" y1="182.301" x2="420" y2="194.3" stroke="#e6e6e6" stroke-width="1.26" stroke-linecap="round"/><circle cx="435" cy="175.5" r="8.7" fill="url(#gLens)" stroke="#9a9ea3" stroke-width="1.6"/><circle cx="470.300" cy="180.500" r="15.600" fill="#a0a0a0"/><rect x="492.9" y="164" width="1.300" height="33.600" fill="#8c8c8c"/><rect x="617.9" y="164" width="1.300" height="33.600" fill="#8c8c8c"/><rect x="703.9" y="164" width="1.300" height="33.600" fill="#8c8c8c"/><path d="M512.500 171 h20.500 q1.500 0 1 1.400 l-5 16 q-0.400 1.200 -1.700 1.200 h-20 q-1.500 0 -1 -1.400 l5 -16 q0.400 -1.200 1.700 -1.200z" fill="#a0a0a0"/><path d="M502 173 h6.500 M502 177 h5.500 M502 181 h4.500 M503 185 h3" stroke="#a0a0a0" stroke-width="1.600"/><path d="M545.500 165 h19.500 l4 4 v26.800 h-27.300 l3.800 -5.500z" fill="#a0a0a0"/><path d="M581.800 169.300 h16 l4.200 5 l6.500 -6 l2.500 2.500 l-6.800 9.500 v15.600 h-22.400z" fill="#a0a0a0"/><circle cx="643" cy="180.600" r="16" fill="#a0a0a0"/><path d="M679 167 h11.200 l-3.800 6.300 h3.600 l-5.400 6.700 h3.600 l-11.700 16.600 l3.300 -11.600 h-4.600 l4.200 -6.400 h-4.400z" fill="#a0a0a0"/><path d="M722.500 166 h8 v3.500 h8 l4.400 5 v21.400 h-22 v-17.500 l-3.500 -6.500 h5.100z" fill="#a0a0a0"/><path d="M768.700 165 L782.500 181.500 H774.300 V193.500 Q774.300 195.900 772 195.900 H764.500 Q762 195.900 762 193.500 V181.500 H754.900z" fill="#a0a0a0"/></svg>
<span class="t" id="t139" style="top:216px;font-size:12px;color:#000;left:429.88px;">Искать:</span>
<div class="b" style="left:532px;top:213px;width:527px;height:22.5px;background:#ffffff;border:1px solid #8f8f8f;border-radius:3px;box-sizing:border-box;"></div>
<svg class="b" style="left:1044px;top:220px" width="12" height="8" viewBox="0 0 12 8"><path d="M2.200 2.800 L6 6.600 L9.800 2.800" fill="none" stroke="#555" stroke-width="1"/></svg>
<svg class="b" style="left:1077.5px;top:211.3px" width="11" height="11.4" viewBox="0 0 11 11.4"><path d="M5.500 0.800 L10.400 6 H7.900 V10.600 H3.100 V6 H0.600z" fill="#39a3ff" stroke="#0b2a70" stroke-width="1.100" stroke-linejoin="round"/><path d="M5.500 2.600 L8 5.200 H6.800 V9.600 H4.400 V5.200 H3z" fill="#9fd6ff"/></svg>
<span class="t" id="t140" style="top:246px;font-size:12px;color:#000;left:429.88px;transform:scaleX(0.992);transform-origin:left center;">С текстом:</span>
<div class="b" style="left:533px;top:243.5px;width:392px;height:21.5px;background:#ffffff;border-bottom:1px solid #8f8f8f;border-radius:2px;box-sizing:border-box;"></div>
<div class="b" style="left:928px;top:243px;width:131px;height:22.5px;background:#ffffff;border:1px solid #8f8f8f;border-radius:3px;box-sizing:border-box;"></div>
<div class="b" style="left:934px;top:246.5px;width:30px;height:14.5px;background:#0a6fd6;"></div>
<span class="t" id="t141" style="top:246.3px;font-size:12px;color:#ffffff;left:934.88px;transform:scaleX(0.989);transform-origin:left center;">Текст</span>
<svg class="b" style="left:1044px;top:250.5px" width="12" height="8" viewBox="0 0 12 8"><path d="M2.200 2.800 L6 6.600 L9.800 2.800" fill="none" stroke="#555" stroke-width="1"/></svg>
<div class="b" style="left:430px;top:280.2px;width:13px;height:13px;background:#f5f5f5;border:1px solid #ababab;border-radius:3px;box-sizing:border-box;"></div>
<span class="t" id="t142" style="top:278.7px;font-size:12px;color:#000;left:445.88px;transform:scaleX(0.983);transform-origin:left center;">Целые слова</span>
<div class="b" style="left:430px;top:305.2px;width:13px;height:13px;background:#0a64c0;border-radius:3px;"></div>
<svg class="b" style="left:430px;top:305.2px" width="13" height="13" viewBox="0 0 13 13"><path d="M3 6.700 L5.500 9.200 L10.200 3.900" fill="none" stroke="#fff" stroke-width="1.300" stroke-linecap="round" stroke-linejoin="round"/></svg>
<span class="t" id="t143" style="top:303.7px;font-size:12px;color:#000;left:445.88px;transform:scaleX(0.993);transform-origin:left center;">Учитывать регистр</span>
<div class="b" style="left:430px;top:330.2px;width:13px;height:13px;background:#f5f5f5;border:1px solid #ababab;border-radius:3px;box-sizing:border-box;"></div>
<span class="t" id="t144" style="top:328.7px;font-size:12px;color:#000;left:445.88px;transform:scaleX(0.986);transform-origin:left center;">Файлы, не содержащие этот текст</span>
<div class="b" style="left:430px;top:355.2px;width:13px;height:13px;background:#f5f5f5;border:1px solid #ababab;border-radius:3px;box-sizing:border-box;"></div>
<span class="t" id="t145" style="top:353.7px;font-size:12px;color:#000;left:445.88px;transform:scaleX(0.990);transform-origin:left center;">Сохранять содержащийся текст</span>
<div class="b" style="left:786px;top:280.2px;width:13px;height:13px;background:#f5f5f5;border:1px solid #ababab;border-radius:3px;box-sizing:border-box;"></div>
<span class="t" id="t146" style="top:278.7px;font-size:12px;color:#000;left:802.38px;transform:scaleX(1.006);transform-origin:left center;">С подпапками</span>
<div class="b" style="left:786px;top:305.2px;width:13px;height:13px;background:#f5f5f5;border:1px solid #ababab;border-radius:3px;box-sizing:border-box;"></div>
<span class="t" id="t147" style="top:303.7px;font-size:12px;color:#000;left:802.38px;">С фильтром</span>
<div class="b" style="left:786px;top:330.2px;width:13px;height:13px;background:#f5f5f5;border:1px solid #ababab;border-radius:3px;box-sizing:border-box;"></div>
<span class="t" id="t148" style="top:328.7px;font-size:12px;color:#000;left:802.38px;transform:scaleX(0.992);transform-origin:left center;">Только очень длинные имена файлов</span>
<div class="b" style="left:786px;top:355.2px;width:13px;height:13px;background:#f5f5f5;border:1px solid #ababab;border-radius:3px;box-sizing:border-box;"></div>
<span class="t" id="t149" style="top:353.7px;font-size:12px;color:#000;left:802.38px;transform:scaleX(1.021);transform-origin:left center;">Игнорировать пробелы</span>
<div class="b" style="left:756px;top:300px;width:19px;height:21px;background:#fdfdfd;border:1px solid #d2d2d2;border-bottom-color:#bdbdbd;border-radius:4px;box-sizing:border-box;"></div>
<span class="t" id="t150" style="top:303px;font-size:12px;color:#000;left:760.38px;transform:scaleX(1.038);transform-origin:left center;">...</span>
<div class="b" style="left:414px;top:378.5px;width:682px;height:346.5px;background:#ffffff;"></div>
<div class="b" style="left:414px;top:378px;width:682px;height:1px;background:#7c7c7c;"></div>
<div class="b" style="left:414px;top:725px;width:682px;height:1px;background:#8f8f8f;"></div>
<div class="b" style="left:537px;top:380px;width:1px;height:344px;background:#efefef;"></div>
<div class="b" style="left:612px;top:380px;width:1px;height:344px;background:#efefef;"></div>
<div class="b" style="left:732px;top:380px;width:1px;height:344px;background:#efefef;"></div>
<div class="b" style="left:777px;top:380px;width:1px;height:344px;background:#efefef;"></div>
<div class="b" style="left:977px;top:380px;width:1px;height:344px;background:#efefef;"></div>
<div class="b" style="left:1077px;top:380px;width:1px;height:344px;background:#efefef;"></div>
<span class="t" id="t151" style="top:384px;font-size:11px;color:#000;left:420.89px;transform:scaleX(1.135);transform-origin:left center;">Имя</span>
<span class="t" id="t152" style="top:384px;font-size:11px;color:#000;left:566.89px;transform:scaleX(1.080);transform-origin:left center;">Размер</span>
<span class="t" id="t153" style="top:384px;font-size:11px;color:#000;left:619.29px;transform:scaleX(1.106);transform-origin:left center;">Изменено</span>
<span class="t" id="t154" style="top:384px;font-size:11px;color:#000;left:742.89px;transform:scaleX(1.088);transform-origin:left center;">Атр...</span>
<span class="t" id="t155" style="top:384px;font-size:11px;color:#000;left:783.89px;transform:scaleX(1.109);transform-origin:left center;">Путь</span>
<span class="t" id="t156" style="top:384px;font-size:11px;color:#000;left:983.89px;transform:scaleX(1.163);transform-origin:left center;">Тип</span>
<div class="b" style="left:733px;top:728px;width:1px;height:23px;background:#d6d6d6;"></div>
<div class="b" style="left:1053px;top:728px;width:1px;height:23px;background:#d6d6d6;"></div></div></div>
<div class="b" style="left:412px;top:109px;width:686px;height:643px;border:1px solid #2b6ca5;border-radius:8px;box-sizing:border-box;"></div>
<div class="b" style="left:413px;top:140px;width:684px;height:611px;border:1px solid #e3f3fc;border-top:none;border-radius:0 0 7px 7px;box-sizing:border-box;"></div>
</body></html>
